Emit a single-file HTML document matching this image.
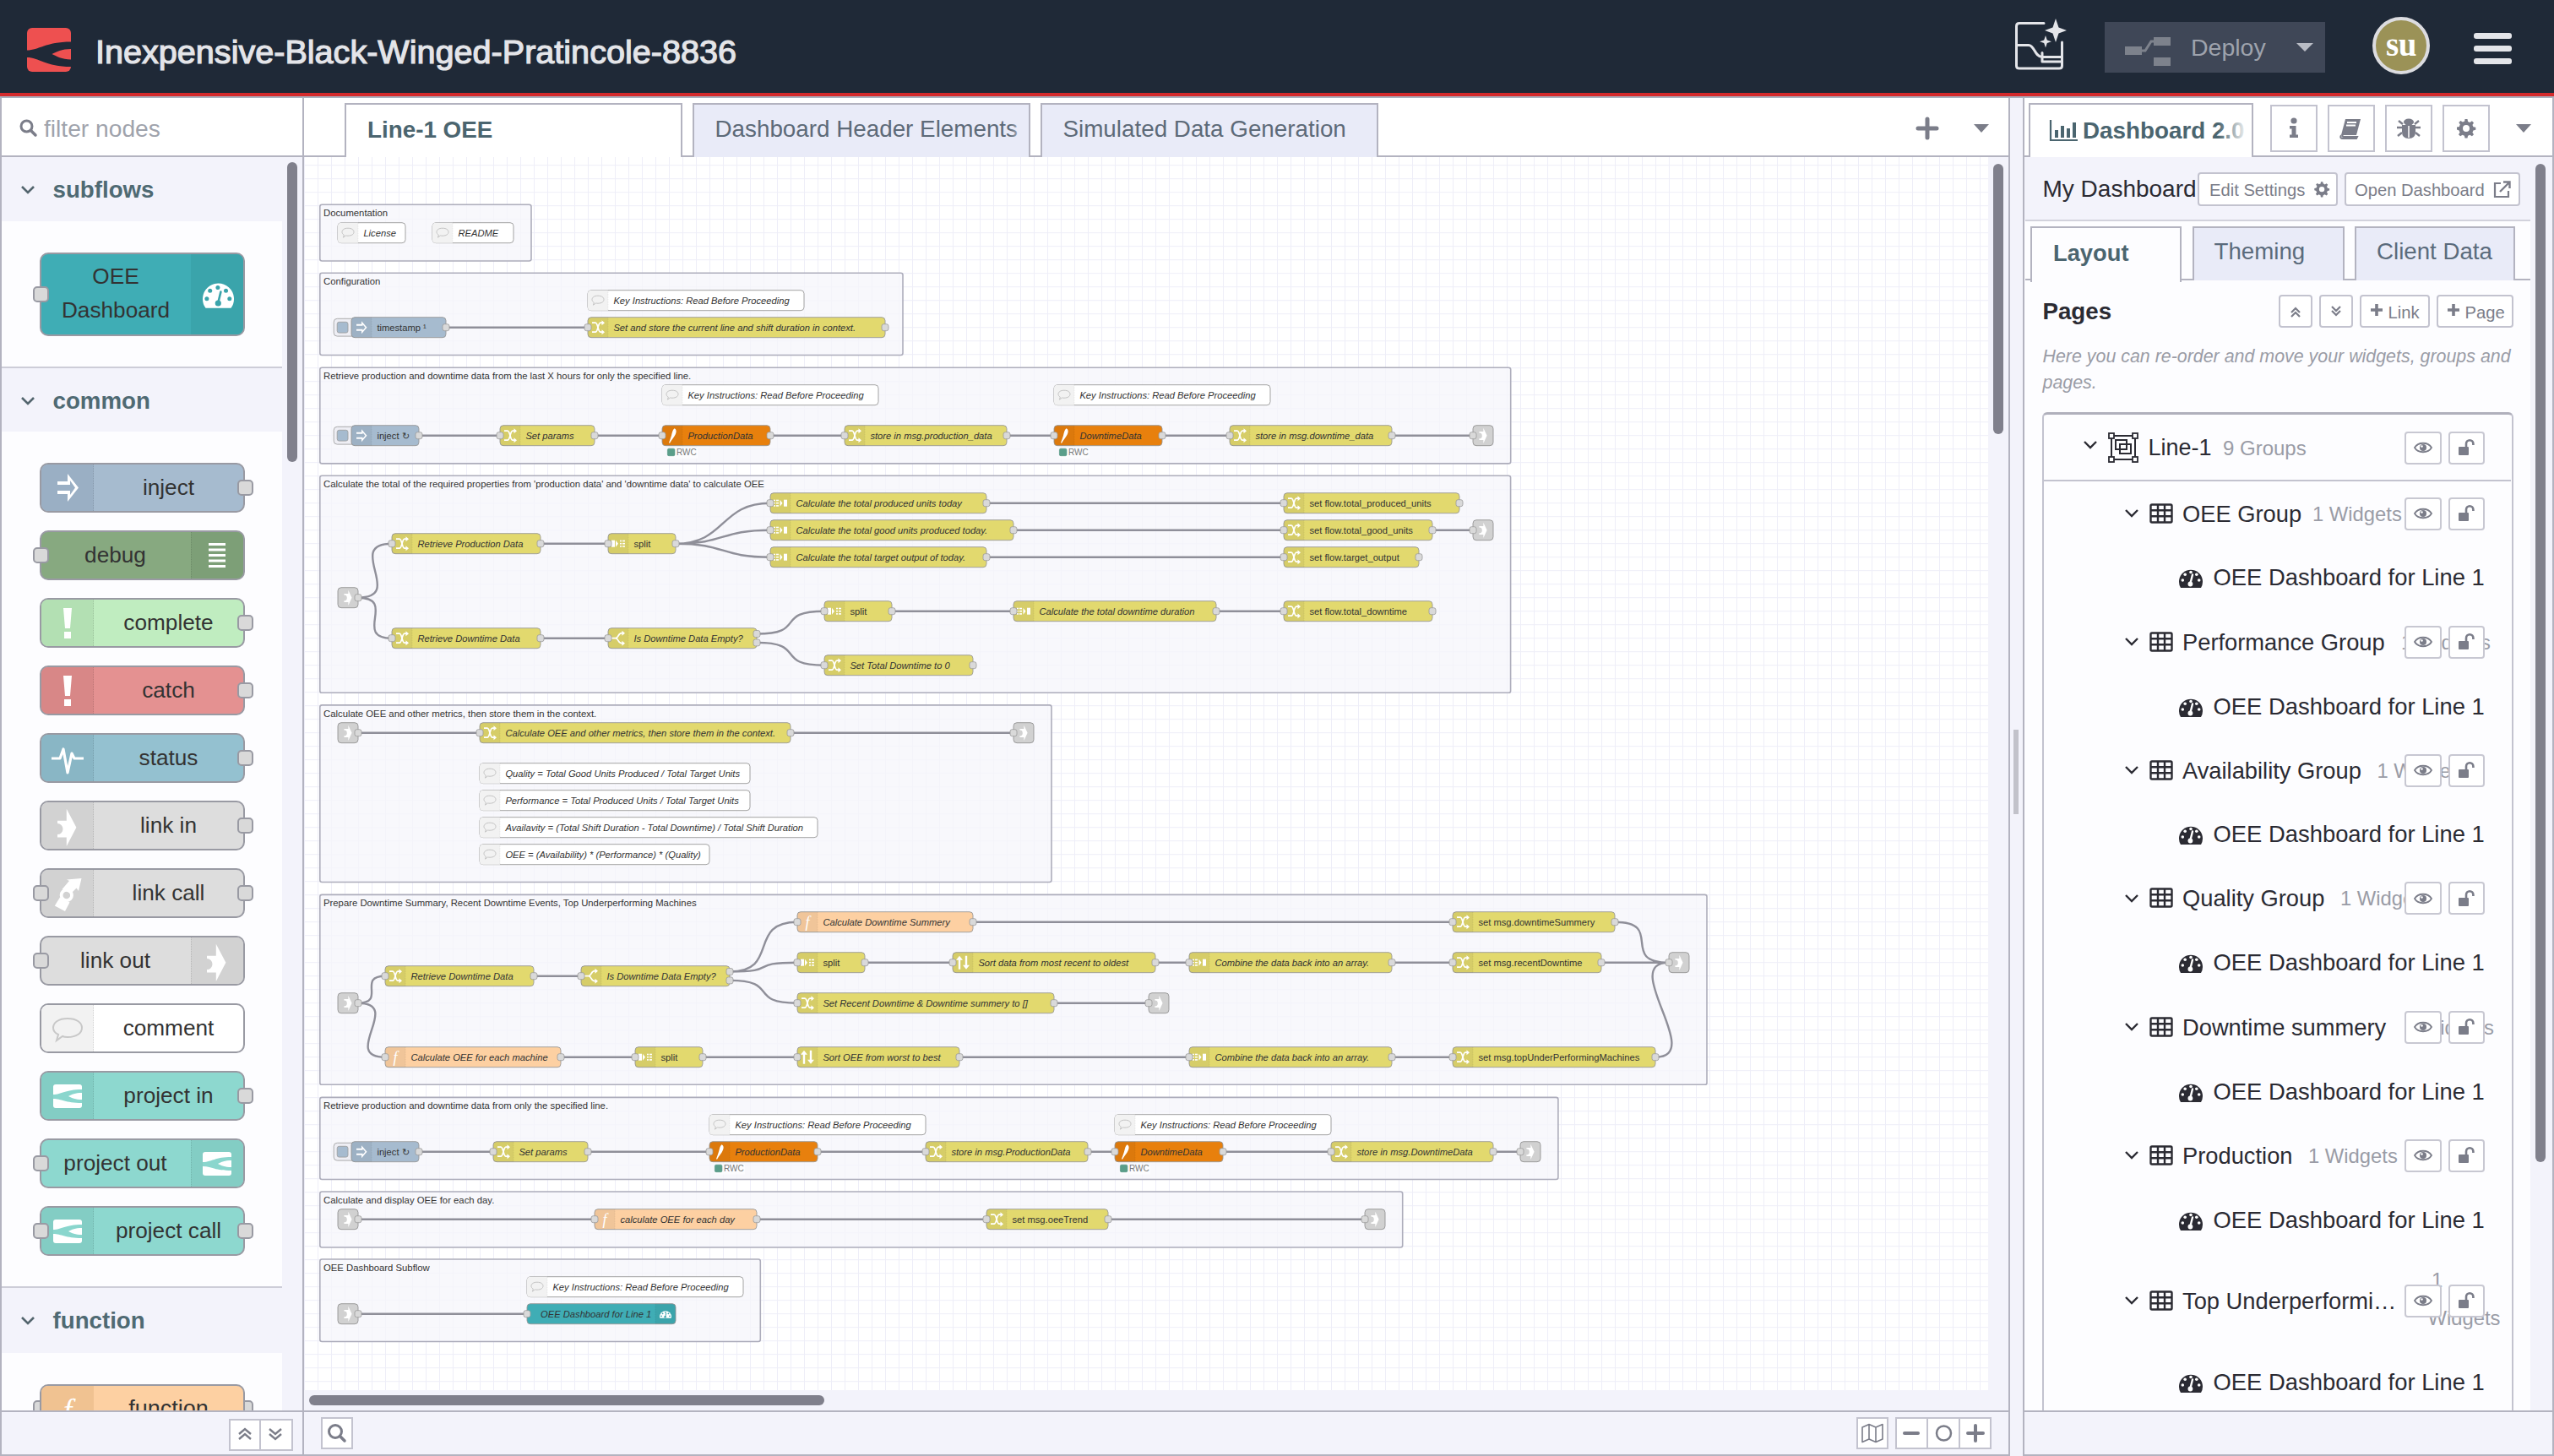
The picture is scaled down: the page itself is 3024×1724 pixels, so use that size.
<!DOCTYPE html><html><head><meta charset="utf-8"><style>html,body{margin:0;padding:0;}body{width:3024px;height:1724px;position:relative;overflow:hidden;background:#fff;font-family:"Liberation Sans", sans-serif;}svg text{font-family:"Liberation Sans", sans-serif;}</style></head><body><div style="position:absolute;left:0px;top:0px;width:3024px;height:110px;background:#1f2937;"></div><div style="position:absolute;left:0px;top:110px;width:3024px;height:4px;background:#d42a2c;"></div><div style="position:absolute;left:0px;top:114px;width:3024px;height:2px;background:#aab0bd;"></div><svg style="position:absolute;left:32px;top:33px;" width="52" height="52" viewBox="0 0 52 52"><rect x="0" y="0" width="52" height="52" rx="6" fill="#ee5050"/><path d="M0 26.5 C 14 26.5, 22 16.5, 52 16.5 L 52 25 C 41 25, 35 28.5, 29.5 31 C 35 33.5, 41 37.5, 52 37.5 L 52 46 C 22 46, 14 35, 0 35 Z" fill="#1f2937"/></svg><div style="position:absolute;left:113px;top:42.48px;font-size:39.6px;line-height:39.6px;color:#e4e5e9;font-weight:normal;font-style:normal;white-space:nowrap;-webkit-text-stroke:1.2px #e4e5e9;">Inexpensive-Black-Winged-Pratincole-8836</div><svg style="position:absolute;left:2380px;top:18px;" width="70" height="68" viewBox="0 0 70 68"><g fill="none" stroke="#e4e5e9" stroke-width="3" stroke-linecap="round" stroke-linejoin="round"><path d="M40 9.5 H 11 Q 7.5 9.5 7.5 13 V 60 Q 7.5 63 11 63 H 58 Q 61.5 63 61.5 60 V 32"/><path d="M7.5 35.5 H 22 C 29 35.5, 29 49.5, 38 49.5 H 61"/><path d="M38 44.5 V 55 H 61"/></g><path d="M54 4 L 57.5 14.5 L 67 18 L 57.5 21.5 L 54 32 L 50.5 21.5 L 41 18 L 50.5 14.5 Z" fill="#e4e5e9"/><path d="M42 24 L 43.8 29.5 L 49 31.3 L 43.8 33 L 42 38.5 L 40.2 33 L 35 31.3 L 40.2 29.5 Z" fill="#e4e5e9"/></svg><div style="position:absolute;left:2492px;top:26px;width:261px;height:60px;background:#3f4757;"></div><svg style="position:absolute;left:2514px;top:40px;" width="60" height="40" viewBox="0 0 60 40"><rect x="2" y="15" width="20" height="10" fill="#7d828c"/><path d="M22 20 L 26 20 L 33 9 L 37 9" stroke="#7d828c" stroke-width="3" fill="none"/><rect x="36" y="4" width="20" height="10" fill="#7d828c"/><rect x="36" y="28" width="20" height="10" fill="#7d828c"/></svg><div style="position:absolute;left:2594px;top:41.87px;font-size:28.5px;line-height:28.5px;color:#9ea3ad;font-weight:normal;font-style:normal;white-space:nowrap;">Deploy</div><svg style="position:absolute;left:2718px;top:50px;" width="22" height="12" viewBox="0 0 22 12"><path d="M1 1 L 21 1 L 11 11 Z" fill="#b9bcc5"/></svg><div style="position:absolute;left:2809px;top:20px;width:60px;height:60px;border-radius:50%;background:#9b9257;border:4px solid #dcdce0;"></div><div style="position:absolute;left:1843px;width:2000px;text-align:center;top:32.99px;font-size:39px;line-height:39px;color:#ffffff;font-weight:bold;font-style:normal;white-space:nowrap;font-family:'Liberation Serif',serif;letter-spacing:-0.5px;">su</div><div style="position:absolute;left:2929px;top:39.3px;width:45px;height:7.0px;background:#e4e5e9;border-radius:3px;"></div><div style="position:absolute;left:2929px;top:54.2px;width:45px;height:7.0px;background:#e4e5e9;border-radius:3px;"></div><div style="position:absolute;left:2929px;top:68.8px;width:45px;height:7.0px;background:#e4e5e9;border-radius:3px;"></div><div style="position:absolute;left:0px;top:116px;width:2px;height:1608px;background:#b3b3c0;"></div><div style="position:absolute;left:358px;top:116px;width:2px;height:1608px;background:#b3b3c0;"></div><div style="position:absolute;left:2px;top:116px;width:356px;height:68px;background:#fff;"></div><div style="position:absolute;left:2px;top:184px;width:356px;height:2px;background:#b3b3c0;"></div><svg style="position:absolute;left:22px;top:140px;" width="24" height="24" viewBox="0 0 24 24"><circle cx="9.5" cy="9.5" r="6.5" fill="none" stroke="#7b7d89" stroke-width="3"/><path d="M14.5 14.5 L 20 20" stroke="#7b7d89" stroke-width="3.5" stroke-linecap="round"/></svg><div style="position:absolute;left:52px;top:137.53px;font-size:28.2px;line-height:28.2px;color:#9fa3ac;font-weight:normal;font-style:normal;white-space:nowrap;">filter nodes</div><div style="position:absolute;left:2px;top:186px;width:356px;height:1484px;background:#f3f3fb;"></div><div style="position:absolute;left:340px;top:192px;width:12px;height:355px;background:#80808c;border-radius:6px;"></div><svg style="position:absolute;left:24px;top:219px;" width="18" height="12" viewBox="0 0 18 12"><path d="M2 2 L 9 9 L 16 2" fill="none" stroke="#53656e" stroke-width="2.6"/></svg><div style="position:absolute;left:62.5px;top:210.85px;font-size:27.7px;line-height:27.7px;color:#4f6a73;font-weight:bold;font-style:normal;white-space:nowrap;">subflows</div><div style="position:absolute;left:2px;top:262px;width:332px;height:172px;background:#fdfdff;"></div><div style="position:absolute;left:2px;top:434px;width:332px;height:2px;background:#cdcdd8;"></div><svg style="position:absolute;left:24px;top:469px;" width="18" height="12" viewBox="0 0 18 12"><path d="M2 2 L 9 9 L 16 2" fill="none" stroke="#53656e" stroke-width="2.6"/></svg><div style="position:absolute;left:62.5px;top:460.85px;font-size:27.7px;line-height:27.7px;color:#4f6a73;font-weight:bold;font-style:normal;white-space:nowrap;">common</div><div style="position:absolute;left:2px;top:511px;width:332px;height:1012px;background:#fdfdff;"></div><div style="position:absolute;left:2px;top:1523px;width:332px;height:2px;background:#cdcdd8;"></div><svg style="position:absolute;left:24px;top:1558px;" width="18" height="12" viewBox="0 0 18 12"><path d="M2 2 L 9 9 L 16 2" fill="none" stroke="#53656e" stroke-width="2.6"/></svg><div style="position:absolute;left:62.5px;top:1549.85px;font-size:27.7px;line-height:27.7px;color:#4f6a73;font-weight:bold;font-style:normal;white-space:nowrap;">function</div><div style="position:absolute;left:2px;top:1602px;width:332px;height:68px;background:#fdfdff;"></div><div style="position:absolute;left:46.5px;top:548px;width:239px;height:55px;border:2px solid #999aa3;border-radius:10px;background:#a6bbcf;overflow:hidden;"><div style="position:absolute;left:0;top:0;width:61px;height:100%;background:#9aafc4;border-right:1px dotted rgba(0,0,0,0.12);"></div><svg style="position:absolute;left:0;top:0" width="62" height="55" viewBox="0 0 62 55"><path d="M19 20 H 31 V 11 L 44 27.5 L 31 44 V 35 H 19 V 31 H 34 V 36 L 40 27.5 L 34 19 V 24 H 19 Z" fill="#fff"/></svg><div style="position:absolute;left:63px;right:0;top:0;height:100%;text-align:center;font-size:26.2px;line-height:55px;color:#333;white-space:nowrap;">inject</div></div><div style="position:absolute;left:280.5px;top:568.0px;width:15px;height:15px;border:2px solid #999aa3;border-radius:5px;background:#d9d9d9;"></div><div style="position:absolute;left:46.5px;top:628px;width:239px;height:55px;border:2px solid #999aa3;border-radius:10px;background:#87a980;overflow:hidden;"><div style="position:absolute;right:0;top:0;width:61px;height:100%;background:#7d9f77;border-left:1px dotted rgba(0,0,0,0.12);"></div><svg style="position:absolute;right:0;top:0" width="62" height="55" viewBox="0 0 62 55"><g fill="#fff"><rect x="21" y="13" width="20" height="3"/><rect x="21" y="19.5" width="20" height="3"/><rect x="21" y="26" width="20" height="3"/><rect x="21" y="32.5" width="20" height="3"/><rect x="21" y="39" width="20" height="3"/></g></svg><div style="position:absolute;left:0;right:63px;top:0;height:100%;text-align:center;font-size:26.2px;line-height:55px;color:#333;white-space:nowrap;">debug</div></div><div style="position:absolute;left:38.5px;top:648.0px;width:15px;height:15px;border:2px solid #999aa3;border-radius:5px;background:#d9d9d9;"></div><div style="position:absolute;left:46.5px;top:708px;width:239px;height:55px;border:2px solid #999aa3;border-radius:10px;background:#c0edc0;overflow:hidden;"><div style="position:absolute;left:0;top:0;width:61px;height:100%;background:#b3e0b3;border-right:1px dotted rgba(0,0,0,0.12);"></div><svg style="position:absolute;left:0;top:0" width="62" height="55" viewBox="0 0 62 55"><g fill="#fff"><path d="M26 10 H 36 L 34 34 H 28 Z"/><rect x="27" y="38" width="8" height="8"/></g></svg><div style="position:absolute;left:63px;right:0;top:0;height:100%;text-align:center;font-size:26.2px;line-height:55px;color:#333;white-space:nowrap;">complete</div></div><div style="position:absolute;left:280.5px;top:728.0px;width:15px;height:15px;border:2px solid #999aa3;border-radius:5px;background:#d9d9d9;"></div><div style="position:absolute;left:46.5px;top:788px;width:239px;height:55px;border:2px solid #999aa3;border-radius:10px;background:#e49191;overflow:hidden;"><div style="position:absolute;left:0;top:0;width:61px;height:100%;background:#d88787;border-right:1px dotted rgba(0,0,0,0.12);"></div><svg style="position:absolute;left:0;top:0" width="62" height="55" viewBox="0 0 62 55"><g fill="#fff"><path d="M26 10 H 36 L 34 34 H 28 Z"/><rect x="27" y="38" width="8" height="8"/></g></svg><div style="position:absolute;left:63px;right:0;top:0;height:100%;text-align:center;font-size:26.2px;line-height:55px;color:#333;white-space:nowrap;">catch</div></div><div style="position:absolute;left:280.5px;top:808.0px;width:15px;height:15px;border:2px solid #999aa3;border-radius:5px;background:#d9d9d9;"></div><div style="position:absolute;left:46.5px;top:868px;width:239px;height:55px;border:2px solid #999aa3;border-radius:10px;background:#94c1d0;overflow:hidden;"><div style="position:absolute;left:0;top:0;width:61px;height:100%;background:#89b6c5;border-right:1px dotted rgba(0,0,0,0.12);"></div><svg style="position:absolute;left:0;top:0" width="62" height="55" viewBox="0 0 62 55"><path d="M12 28 H 22 L 26 17 L 31 45 L 36 22 L 39 28 H 50" fill="none" stroke="#fff" stroke-width="3.2" stroke-linejoin="round"/></svg><div style="position:absolute;left:63px;right:0;top:0;height:100%;text-align:center;font-size:26.2px;line-height:55px;color:#333;white-space:nowrap;">status</div></div><div style="position:absolute;left:280.5px;top:888.0px;width:15px;height:15px;border:2px solid #999aa3;border-radius:5px;background:#d9d9d9;"></div><div style="position:absolute;left:46.5px;top:948px;width:239px;height:55px;border:2px solid #999aa3;border-radius:10px;background:#dddddd;overflow:hidden;"><div style="position:absolute;left:0;top:0;width:61px;height:100%;background:#d2d2d2;border-right:1px dotted rgba(0,0,0,0.12);"></div><svg style="position:absolute;left:0;top:0" width="62" height="55" viewBox="0 0 62 55"><path d="M19 21.7 H29.8 V7.7 L41.4 29.7 L29.8 52 V41.5 H19 V38.1 A6.5 6.5 0 0 0 19 25.1 Z" fill="#fff"/></svg><div style="position:absolute;left:63px;right:0;top:0;height:100%;text-align:center;font-size:26.2px;line-height:55px;color:#333;white-space:nowrap;">link in</div></div><div style="position:absolute;left:280.5px;top:968.0px;width:15px;height:15px;border:2px solid #999aa3;border-radius:5px;background:#d9d9d9;"></div><div style="position:absolute;left:46.5px;top:1028px;width:239px;height:55px;border:2px solid #999aa3;border-radius:10px;background:#dddddd;overflow:hidden;"><div style="position:absolute;left:0;top:0;width:61px;height:100%;background:#d2d2d2;border-right:1px dotted rgba(0,0,0,0.12);"></div><svg style="position:absolute;left:0;top:0" width="62" height="55" viewBox="0 0 62 55"><circle cx="29.8" cy="30" r="6.2" fill="none" stroke="#fff" stroke-width="3.8"/><path d="M24.5 23 L 33 13 L 30 11.5 L 47.5 10 L 44 25 L 41.5 21.5 L 35 28 Z" fill="#fff"/><path d="M15.8 42.4 L 22 32.5 L 33.5 38.5 L 28 49 Z" fill="#fff"/></svg><div style="position:absolute;left:63px;right:0;top:0;height:100%;text-align:center;font-size:26.2px;line-height:55px;color:#333;white-space:nowrap;">link call</div></div><div style="position:absolute;left:38.5px;top:1048.0px;width:15px;height:15px;border:2px solid #999aa3;border-radius:5px;background:#d9d9d9;"></div><div style="position:absolute;left:280.5px;top:1048.0px;width:15px;height:15px;border:2px solid #999aa3;border-radius:5px;background:#d9d9d9;"></div><div style="position:absolute;left:46.5px;top:1108px;width:239px;height:55px;border:2px solid #999aa3;border-radius:10px;background:#dddddd;overflow:hidden;"><div style="position:absolute;right:0;top:0;width:61px;height:100%;background:#d2d2d2;border-left:1px dotted rgba(0,0,0,0.12);"></div><svg style="position:absolute;right:0;top:0" width="62" height="55" viewBox="0 0 62 55"><path d="M19 21.7 H29.8 V7.7 L41.4 29.7 L29.8 52 V41.5 H19 V38.1 A6.5 6.5 0 0 0 19 25.1 Z" fill="#fff"/></svg><div style="position:absolute;left:0;right:63px;top:0;height:100%;text-align:center;font-size:26.2px;line-height:55px;color:#333;white-space:nowrap;">link out</div></div><div style="position:absolute;left:38.5px;top:1128.0px;width:15px;height:15px;border:2px solid #999aa3;border-radius:5px;background:#d9d9d9;"></div><div style="position:absolute;left:46.5px;top:1188px;width:239px;height:55px;border:2px solid #999aa3;border-radius:10px;background:#ffffff;overflow:hidden;"><div style="position:absolute;left:0;top:0;width:61px;height:100%;background:#f2f2f2;border-right:1px dotted rgba(0,0,0,0.12);"></div><svg style="position:absolute;left:0;top:0" width="62" height="55" viewBox="0 0 62 55"><path d="M31 16 C 42 16 48 21 48 27 C 48 33 42 38 31 38 C 29 38 27 38 25 37 L 18 42 L 20 35 C 16 33 14 30 14 27 C 14 21 20 16 31 16 Z" fill="none" stroke="#c8c8c8" stroke-width="2"/></svg><div style="position:absolute;left:63px;right:0;top:0;height:100%;text-align:center;font-size:26.2px;line-height:55px;color:#333;white-space:nowrap;">comment</div></div><div style="position:absolute;left:46.5px;top:1268px;width:239px;height:55px;border:2px solid #999aa3;border-radius:10px;background:#8dd8cf;overflow:hidden;"><div style="position:absolute;left:0;top:0;width:61px;height:100%;background:#83cdc4;border-right:1px dotted rgba(0,0,0,0.12);"></div><svg style="position:absolute;left:0;top:0" width="62" height="55" viewBox="0 0 62 55"><rect x="14" y="14" width="34" height="28" rx="3" fill="#fff"/><path d="M14 26 C 24 26, 28 20, 48 20 L 48 24 C 40 24, 36 26, 32 28 C 36 30, 40 32, 48 32 L 48 36 C 28 36, 24 31, 14 31 Z" fill="#8ad6cd"/></svg><div style="position:absolute;left:63px;right:0;top:0;height:100%;text-align:center;font-size:26.2px;line-height:55px;color:#333;white-space:nowrap;">project in</div></div><div style="position:absolute;left:280.5px;top:1288.0px;width:15px;height:15px;border:2px solid #999aa3;border-radius:5px;background:#d9d9d9;"></div><div style="position:absolute;left:46.5px;top:1348px;width:239px;height:55px;border:2px solid #999aa3;border-radius:10px;background:#8dd8cf;overflow:hidden;"><div style="position:absolute;right:0;top:0;width:61px;height:100%;background:#83cdc4;border-left:1px dotted rgba(0,0,0,0.12);"></div><svg style="position:absolute;right:0;top:0" width="62" height="55" viewBox="0 0 62 55"><rect x="14" y="14" width="34" height="28" rx="3" fill="#fff"/><path d="M14 26 C 24 26, 28 20, 48 20 L 48 24 C 40 24, 36 26, 32 28 C 36 30, 40 32, 48 32 L 48 36 C 28 36, 24 31, 14 31 Z" fill="#8ad6cd"/></svg><div style="position:absolute;left:0;right:63px;top:0;height:100%;text-align:center;font-size:26.2px;line-height:55px;color:#333;white-space:nowrap;">project out</div></div><div style="position:absolute;left:38.5px;top:1368.0px;width:15px;height:15px;border:2px solid #999aa3;border-radius:5px;background:#d9d9d9;"></div><div style="position:absolute;left:46.5px;top:1428px;width:239px;height:55px;border:2px solid #999aa3;border-radius:10px;background:#8dd8cf;overflow:hidden;"><div style="position:absolute;left:0;top:0;width:61px;height:100%;background:#83cdc4;border-right:1px dotted rgba(0,0,0,0.12);"></div><svg style="position:absolute;left:0;top:0" width="62" height="55" viewBox="0 0 62 55"><rect x="14" y="14" width="34" height="28" rx="3" fill="#fff"/><path d="M14 26 C 24 26, 28 20, 48 20 L 48 24 C 40 24, 36 26, 32 28 C 36 30, 40 32, 48 32 L 48 36 C 28 36, 24 31, 14 31 Z" fill="#8ad6cd"/></svg><div style="position:absolute;left:63px;right:0;top:0;height:100%;text-align:center;font-size:26.2px;line-height:55px;color:#333;white-space:nowrap;">project call</div></div><div style="position:absolute;left:38.5px;top:1448.0px;width:15px;height:15px;border:2px solid #999aa3;border-radius:5px;background:#d9d9d9;"></div><div style="position:absolute;left:280.5px;top:1448.0px;width:15px;height:15px;border:2px solid #999aa3;border-radius:5px;background:#d9d9d9;"></div><div style="position:absolute;left:46.5px;top:299px;width:239px;height:95px;border:2px solid #999aa3;border-radius:10px;background:#3fadb5;overflow:hidden;"><div style="position:absolute;right:0;top:0;width:62px;height:100%;background:#3aa4ab;"></div><svg style="position:absolute;right:0;top:0" width="62" height="95" viewBox="0 0 62 95"><path d="M17.5 63.8 A18.5 18.5 0 1 1 47.5 63.8 Z" fill="#fff"/><g fill="#3aa4ab"><circle cx="31.9" cy="39.5" r="2.5"/><circle cx="22.7" cy="43.2" r="2.5"/><circle cx="41.5" cy="43.2" r="2.5"/><circle cx="18.9" cy="52.7" r="2.5"/><circle cx="45.8" cy="52.7" r="2.5"/></g><path d="M35.4 44.6 L 32.4 57" stroke="#3aa4ab" stroke-width="2.6" stroke-linecap="round"/><circle cx="32.3" cy="58" r="3.6" fill="#3aa4ab"/></svg><div style="position:absolute;left:0;width:177px;top:6px;text-align:center;font-size:26.2px;line-height:40px;color:#333;">OEE<br>Dashboard</div></div><div style="position:absolute;left:38.5px;top:338.5px;width:15px;height:15px;border:2px solid #999aa3;border-radius:5px;background:#d9d9d9;"></div><div style="position:absolute;left:0;top:1602px;width:334px;height:68px;overflow:hidden;"><div style="position:absolute;left:38.5px;top:56px;width:15px;height:15px;border:2px solid #999aa3;border-radius:5px;background:#d9d9d9;"></div><div style="position:absolute;left:280.5px;top:56px;width:15px;height:15px;border:2px solid #999aa3;border-radius:5px;background:#d9d9d9;"></div><div style="position:absolute;left:46.5px;top:37px;width:239px;height:55px;border:2px solid #999aa3;border-radius:10px;background:#fdd0a2;overflow:hidden;"><div style="position:absolute;left:0;top:0;width:62px;height:100%;background:#f0c291;"></div><svg style="position:absolute;left:0;top:0" width="62" height="55"><text x="31" y="42" text-anchor="middle" font-size="38" font-style="italic" fill="#fff" style="font-family:'Liberation Serif',serif">f</text></svg><div style="position:absolute;left:63px;right:0;top:0;text-align:center;font-size:27px;line-height:55px;color:#333;">function</div></div></div><div style="position:absolute;left:2px;top:1670px;width:356px;height:2px;background:#b3b3c0;"></div><div style="position:absolute;left:2px;top:1672px;width:356px;height:50px;background:#f3f3fb;"></div><div style="position:absolute;left:0px;top:1722px;width:360px;height:2px;background:#b3b3c0;"></div><div style="position:absolute;left:271px;top:1680px;width:72px;height:34px;border:2px solid #c3c3cf;background:#fff;"></div><div style="position:absolute;left:307px;top:1680px;width:2px;height:36px;background:#c3c3cf;"></div><svg style="position:absolute;left:275px;top:1686px;" width="30" height="24" viewBox="0 0 30 24"><path d="M8 12 L 15 6 L 22 12 M8 18 L 15 12 L 22 18" fill="none" stroke="#7b7d89" stroke-width="2.4"/></svg><svg style="position:absolute;left:311px;top:1686px;" width="30" height="24" viewBox="0 0 30 24"><path d="M8 6 L 15 12 L 22 6 M8 12 L 15 18 L 22 12" fill="none" stroke="#7b7d89" stroke-width="2.4"/></svg><div style="position:absolute;left:360px;top:116px;width:2018px;height:68px;background:#fff;"></div><div style="position:absolute;left:360px;top:184px;width:2018px;height:2px;background:#b3b3c0;"></div><div style="position:absolute;left:2378px;top:116px;width:2px;height:1608px;background:#b3b3c0;"></div><div style="position:absolute;left:408px;top:122px;width:396px;height:64px;border:2px solid #b3b3c0;border-bottom:none;background:#fff;"></div><div style="position:absolute;left:435px;top:139.77px;font-size:27.8px;line-height:27.8px;color:#4b656f;font-weight:bold;font-style:normal;white-space:nowrap;">Line-1 OEE</div><div style="position:absolute;left:820px;top:122px;width:396px;height:62px;border:2px solid #b3b3c0;border-bottom:none;background:#e9ebf8;overflow:hidden;"><div style="position:absolute;left:24.5px;top:14.97px;font-size:27.8px;line-height:27.8px;color:#5d6a78;white-space:nowrap;">Dashboard Header Elements</div><div style="position:absolute;right:0;top:0;width:22px;height:100%;background:linear-gradient(to right,rgba(233,235,248,0),#e9ebf8 90%);"></div></div><div style="position:absolute;left:1232px;top:122px;width:396px;height:62px;border:2px solid #b3b3c0;border-bottom:none;background:#e9ebf8;overflow:hidden;"><div style="position:absolute;left:24.5px;top:14.97px;font-size:27.8px;line-height:27.8px;color:#5d6a78;white-space:nowrap;">Simulated Data Generation</div><div style="position:absolute;right:0;top:0;width:22px;height:100%;background:linear-gradient(to right,rgba(233,235,248,0),#e9ebf8 90%);"></div></div><svg style="position:absolute;left:2268px;top:138px;" width="28" height="28" viewBox="0 0 28 28"><path d="M14 3 V 25 M3 14 H 25" stroke="#7b7d89" stroke-width="5" stroke-linecap="round"/></svg><svg style="position:absolute;left:2336px;top:146px;" width="20" height="12" viewBox="0 0 20 12"><path d="M1 1 H 19 L 10 11 Z" fill="#7b7d89"/></svg><svg style="position:absolute;left:360px;top:186px" width="1994" height="1460" viewBox="360 186 1994 1460"><rect x="360" y="186" width="1994" height="1460" fill="#ffffff"/><path d="M360.5 186V1646M376.5 186V1646M392.5 186V1646M408.5 186V1646M424.5 186V1646M440.5 186V1646M456.5 186V1646M472.5 186V1646M488.5 186V1646M504.5 186V1646M520.5 186V1646M536.5 186V1646M552.5 186V1646M568.5 186V1646M584.5 186V1646M600.5 186V1646M616.5 186V1646M632.5 186V1646M648.5 186V1646M664.5 186V1646M680.5 186V1646M696.5 186V1646M712.5 186V1646M728.5 186V1646M744.5 186V1646M760.5 186V1646M776.5 186V1646M792.5 186V1646M808.5 186V1646M824.5 186V1646M840.5 186V1646M856.5 186V1646M872.5 186V1646M888.5 186V1646M904.5 186V1646M920.5 186V1646M936.5 186V1646M952.5 186V1646M968.5 186V1646M984.5 186V1646M1000.5 186V1646M1016.5 186V1646M1032.5 186V1646M1048.5 186V1646M1064.5 186V1646M1080.5 186V1646M1096.5 186V1646M1112.5 186V1646M1128.5 186V1646M1144.5 186V1646M1160.5 186V1646M1176.5 186V1646M1192.5 186V1646M1208.5 186V1646M1224.5 186V1646M1240.5 186V1646M1256.5 186V1646M1272.5 186V1646M1288.5 186V1646M1304.5 186V1646M1320.5 186V1646M1336.5 186V1646M1352.5 186V1646M1368.5 186V1646M1384.5 186V1646M1400.5 186V1646M1416.5 186V1646M1432.5 186V1646M1448.5 186V1646M1464.5 186V1646M1480.5 186V1646M1496.5 186V1646M1512.5 186V1646M1528.5 186V1646M1544.5 186V1646M1560.5 186V1646M1576.5 186V1646M1592.5 186V1646M1608.5 186V1646M1624.5 186V1646M1640.5 186V1646M1656.5 186V1646M1672.5 186V1646M1688.5 186V1646M1704.5 186V1646M1720.5 186V1646M1736.5 186V1646M1752.5 186V1646M1768.5 186V1646M1784.5 186V1646M1800.5 186V1646M1816.5 186V1646M1832.5 186V1646M1848.5 186V1646M1864.5 186V1646M1880.5 186V1646M1896.5 186V1646M1912.5 186V1646M1928.5 186V1646M1944.5 186V1646M1960.5 186V1646M1976.5 186V1646M1992.5 186V1646M2008.5 186V1646M2024.5 186V1646M2040.5 186V1646M2056.5 186V1646M2072.5 186V1646M2088.5 186V1646M2104.5 186V1646M2120.5 186V1646M2136.5 186V1646M2152.5 186V1646M2168.5 186V1646M2184.5 186V1646M2200.5 186V1646M2216.5 186V1646M2232.5 186V1646M2248.5 186V1646M2264.5 186V1646M2280.5 186V1646M2296.5 186V1646M2312.5 186V1646M2328.5 186V1646M2344.5 186V1646M360 195.7H2354M360 211.7H2354M360 227.7H2354M360 243.7H2354M360 259.7H2354M360 275.7H2354M360 291.7H2354M360 307.7H2354M360 323.7H2354M360 339.7H2354M360 355.7H2354M360 371.7H2354M360 387.7H2354M360 403.7H2354M360 419.7H2354M360 435.7H2354M360 451.7H2354M360 467.7H2354M360 483.7H2354M360 499.7H2354M360 515.7H2354M360 531.7H2354M360 547.7H2354M360 563.7H2354M360 579.7H2354M360 595.7H2354M360 611.7H2354M360 627.7H2354M360 643.7H2354M360 659.7H2354M360 675.7H2354M360 691.7H2354M360 707.7H2354M360 723.7H2354M360 739.7H2354M360 755.7H2354M360 771.7H2354M360 787.7H2354M360 803.7H2354M360 819.7H2354M360 835.7H2354M360 851.7H2354M360 867.7H2354M360 883.7H2354M360 899.7H2354M360 915.7H2354M360 931.7H2354M360 947.7H2354M360 963.7H2354M360 979.7H2354M360 995.7H2354M360 1011.7H2354M360 1027.7H2354M360 1043.7H2354M360 1059.7H2354M360 1075.7H2354M360 1091.7H2354M360 1107.7H2354M360 1123.7H2354M360 1139.7H2354M360 1155.7H2354M360 1171.7H2354M360 1187.7H2354M360 1203.7H2354M360 1219.7H2354M360 1235.7H2354M360 1251.7H2354M360 1267.7H2354M360 1283.7H2354M360 1299.7H2354M360 1315.7H2354M360 1331.7H2354M360 1347.7H2354M360 1363.7H2354M360 1379.7H2354M360 1395.7H2354M360 1411.7H2354M360 1427.7H2354M360 1443.7H2354M360 1459.7H2354M360 1475.7H2354M360 1491.7H2354M360 1507.7H2354M360 1523.7H2354M360 1539.7H2354M360 1555.7H2354M360 1571.7H2354M360 1587.7H2354M360 1603.7H2354M360 1619.7H2354M360 1635.7H2354" stroke="#eeeef8" stroke-width="1" fill="none"/><rect x="378.8" y="242.3" width="250.2" height="66.7" rx="2.4" fill="#f5f5fb" fill-opacity="0.75" stroke="#adadbb" stroke-width="1.6"/><text x="383.0" y="256.1" font-size="11.32" fill="#333">Documentation</text><rect x="378.8" y="323.2" width="690.2" height="97.3" rx="2.4" fill="#f5f5fb" fill-opacity="0.75" stroke="#adadbb" stroke-width="1.6"/><text x="383.0" y="337.0" font-size="11.32" fill="#333">Configuration</text><rect x="378.8" y="435.2" width="1409.9" height="113.7" rx="2.4" fill="#f5f5fb" fill-opacity="0.75" stroke="#adadbb" stroke-width="1.6"/><text x="383.0" y="449.0" font-size="11.32" fill="#333">Retrieve production and downtime data from the last X hours for only the specified line.</text><rect x="378.8" y="563.2" width="1409.8" height="257.1" rx="2.4" fill="#f5f5fb" fill-opacity="0.75" stroke="#adadbb" stroke-width="1.6"/><text x="383.0" y="577.0" font-size="11.32" fill="#333">Calculate the total of the required properties from 'production data' and 'downtime data' to calculate OEE</text><rect x="378.8" y="834.9" width="866.2" height="209.6" rx="2.4" fill="#f5f5fb" fill-opacity="0.75" stroke="#adadbb" stroke-width="1.6"/><text x="383.0" y="848.6999999999999" font-size="11.32" fill="#333">Calculate OEE and other metrics, then store them in the context.</text><rect x="378.8" y="1059.4" width="1642.2" height="224.9" rx="2.4" fill="#f5f5fb" fill-opacity="0.75" stroke="#adadbb" stroke-width="1.6"/><text x="383.0" y="1073.2" font-size="11.32" fill="#333">Prepare Downtime Summary, Recent Downtime Events, Top Underperforming Machines</text><rect x="378.8" y="1299.4" width="1466.1" height="97.1" rx="2.4" fill="#f5f5fb" fill-opacity="0.75" stroke="#adadbb" stroke-width="1.6"/><text x="383.0" y="1313.2" font-size="11.32" fill="#333">Retrieve production and downtime data from only the specified line.</text><rect x="378.8" y="1411" width="1281.9" height="66.0" rx="2.4" fill="#f5f5fb" fill-opacity="0.75" stroke="#adadbb" stroke-width="1.6"/><text x="383.0" y="1424.8" font-size="11.32" fill="#333">Calculate and display OEE for each day.</text><rect x="378.8" y="1491" width="521.5" height="97.5" rx="2.4" fill="#f5f5fb" fill-opacity="0.75" stroke="#adadbb" stroke-width="1.6"/><text x="383.0" y="1504.8" font-size="11.32" fill="#333">OEE Dashboard Subflow</text><path d="M528.0 387.7 C588.0 387.7 636.0 387.7 696.0 387.7 M496.0 515.7 C556.0 515.7 532.0 515.7 592.0 515.7 M704.0 515.7 C764.0 515.7 724.0 515.7 784.0 515.7 M912.0 515.7 C972.0 515.7 940.0 515.7 1000.0 515.7 M1192.0 515.7 C1234.0 515.7 1206.0 515.7 1248.0 515.7 M1376.0 515.7 C1436.0 515.7 1396.0 515.7 1456.0 515.7 M1648.0 515.7 C1708.0 515.7 1684.0 515.7 1744.0 515.7 M424.0 707.7 C480.6 707.7 407.4 643.7 464.0 643.7 M424.0 707.7 C470.9 707.7 417.1 755.7 464.0 755.7 M640.0 643.7 C700.0 643.7 660.0 643.7 720.0 643.7 M800.0 643.7 C860.0 643.7 852.0 595.7 912.0 595.7 M800.0 643.7 C860.0 643.7 852.0 627.7 912.0 627.7 M800.0 643.7 C860.0 643.7 852.0 659.7 912.0 659.7 M1168.0 595.7 C1228.0 595.7 1460.0 595.7 1520.0 595.7 M1200.0 627.7 C1260.0 627.7 1460.0 627.7 1520.0 627.7 M1168.0 659.7 C1228.0 659.7 1460.0 659.7 1520.0 659.7 M1696.0 627.7 C1732.0 627.7 1708.0 627.7 1744.0 627.7 M640.0 755.7 C700.0 755.7 660.0 755.7 720.0 755.7 M896.0 750.5 C956.0 750.5 916.0 723.7 976.0 723.7 M896.0 760.9 C956.0 760.9 916.0 787.7 976.0 787.7 M1056.0 723.7 C1116.0 723.7 1140.0 723.7 1200.0 723.7 M1440.0 723.7 C1500.0 723.7 1460.0 723.7 1520.0 723.7 M424.0 867.7 C484.0 867.7 508.0 867.7 568.0 867.7 M936.0 867.7 C996.0 867.7 1140.0 867.7 1200.0 867.7 M424.0 1187.7 C457.9 1187.7 422.1 1155.7 456.0 1155.7 M424.0 1187.7 C477.7 1187.7 402.3 1251.7 456.0 1251.7 M632.0 1155.7 C674.0 1155.7 646.0 1155.7 688.0 1155.7 M864.0 1150.5 C924.0 1150.5 884.0 1091.7 944.0 1091.7 M864.0 1150.5 C924.0 1150.5 884.0 1139.7 944.0 1139.7 M864.0 1160.9 C924.0 1160.9 884.0 1187.7 944.0 1187.7 M1152.0 1091.7 C1212.0 1091.7 1660.0 1091.7 1720.0 1091.7 M1024.0 1139.7 C1084.0 1139.7 1068.0 1139.7 1128.0 1139.7 M1368.0 1139.7 C1398.0 1139.7 1378.0 1139.7 1408.0 1139.7 M1648.0 1139.7 C1702.0 1139.7 1666.0 1139.7 1720.0 1139.7 M1248.0 1187.7 C1308.0 1187.7 1300.0 1187.7 1360.0 1187.7 M664.0 1251.7 C724.0 1251.7 692.0 1251.7 752.0 1251.7 M832.0 1251.7 C892.0 1251.7 884.0 1251.7 944.0 1251.7 M1136.0 1251.7 C1196.0 1251.7 1348.0 1251.7 1408.0 1251.7 M1648.0 1251.7 C1702.0 1251.7 1666.0 1251.7 1720.0 1251.7 M1912.0 1091.7 C1972.0 1091.7 1916.0 1139.7 1976.0 1139.7 M1896.0 1139.7 C1956.0 1139.7 1916.0 1139.7 1976.0 1139.7 M1960.0 1251.7 C2020.0 1251.7 1916.0 1139.7 1976.0 1139.7 M496.0 1363.7 C556.0 1363.7 524.0 1363.7 584.0 1363.7 M696.0 1363.7 C756.0 1363.7 780.0 1363.7 840.0 1363.7 M968.0 1363.7 C1028.0 1363.7 1036.0 1363.7 1096.0 1363.7 M1288.0 1363.7 C1312.0 1363.7 1296.0 1363.7 1320.0 1363.7 M1448.0 1363.7 C1508.0 1363.7 1516.0 1363.7 1576.0 1363.7 M1768.0 1363.7 C1792.0 1363.7 1776.0 1363.7 1800.0 1363.7 M424.0 1443.7 C484.0 1443.7 644.0 1443.7 704.0 1443.7 M896.0 1443.7 C956.0 1443.7 1108.0 1443.7 1168.0 1443.7 M1312.0 1443.7 C1372.0 1443.7 1556.0 1443.7 1616.0 1443.7 M424.0 1555.7 C484.0 1555.7 564.0 1555.7 624.0 1555.7" stroke="#8f8f99" stroke-width="2.4" fill="none"/><rect x="400" y="263.7" width="80" height="24" rx="4" fill="#ffffff" stroke="#999" stroke-width="0.9"/><path d="M424 263.7 H404 Q400 263.7 400 267.7 V283.7 Q400 287.7 404 287.7 H424 Z" fill="#f2f2f2" fill-opacity="1"/><line x1="424" y1="264.2" x2="424" y2="287.2" stroke="#000" stroke-opacity="0.1" stroke-dasharray="1 1" stroke-width="0.8"/><g transform="translate(400 263.7)"><path d="M12 6.5 C 16.5 6.5 19 8.5 19 11 C 19 13.5 16.5 15.5 12 15.5 C 11 15.5 10.5 15.5 9.5 15.2 L 6.5 17.5 L 7.3 14.4 C 5.8 13.6 5 12.4 5 11 C 5 8.5 7.5 6.5 12 6.5 Z" fill="none" stroke="#c4c4c4" stroke-width="1"/></g><text x="430.4" y="279.59999999999997" font-size="11.2" font-style="italic" fill="#333">License</text><rect x="512" y="263.7" width="96" height="24" rx="4" fill="#ffffff" stroke="#999" stroke-width="0.9"/><path d="M536 263.7 H516 Q512 263.7 512 267.7 V283.7 Q512 287.7 516 287.7 H536 Z" fill="#f2f2f2" fill-opacity="1"/><line x1="536" y1="264.2" x2="536" y2="287.2" stroke="#000" stroke-opacity="0.1" stroke-dasharray="1 1" stroke-width="0.8"/><g transform="translate(512 263.7)"><path d="M12 6.5 C 16.5 6.5 19 8.5 19 11 C 19 13.5 16.5 15.5 12 15.5 C 11 15.5 10.5 15.5 9.5 15.2 L 6.5 17.5 L 7.3 14.4 C 5.8 13.6 5 12.4 5 11 C 5 8.5 7.5 6.5 12 6.5 Z" fill="none" stroke="#c4c4c4" stroke-width="1"/></g><text x="542.4" y="279.59999999999997" font-size="11.2" font-style="italic" fill="#333">README</text><rect x="696" y="343.7" width="256" height="24" rx="4" fill="#ffffff" stroke="#999" stroke-width="0.9"/><path d="M720 343.7 H700 Q696 343.7 696 347.7 V363.7 Q696 367.7 700 367.7 H720 Z" fill="#f2f2f2" fill-opacity="1"/><line x1="720" y1="344.2" x2="720" y2="367.2" stroke="#000" stroke-opacity="0.1" stroke-dasharray="1 1" stroke-width="0.8"/><g transform="translate(696 343.7)"><path d="M12 6.5 C 16.5 6.5 19 8.5 19 11 C 19 13.5 16.5 15.5 12 15.5 C 11 15.5 10.5 15.5 9.5 15.2 L 6.5 17.5 L 7.3 14.4 C 5.8 13.6 5 12.4 5 11 C 5 8.5 7.5 6.5 12 6.5 Z" fill="none" stroke="#c4c4c4" stroke-width="1"/></g><text x="726.4" y="359.59999999999997" font-size="11.2" font-style="italic" fill="#333">Key Instructions: Read Before Proceeding</text><rect x="395.2" y="377.3" width="25" height="20.8" rx="4" fill="#eeeef4" stroke="#999" stroke-width="0.8"/><rect x="399.2" y="381.3" width="12.8" height="12.8" rx="2.4" fill="#a6bbcf" stroke="#999" stroke-width="0.8"/><rect x="416" y="375.7" width="112" height="24" rx="4" fill="#a6bbcf" stroke="#999" stroke-width="0.9"/><path d="M440 375.7 H420 Q416 375.7 416 379.7 V395.7 Q416 399.7 420 399.7 H440 Z" fill="#000" fill-opacity="0.05"/><line x1="440" y1="376.2" x2="440" y2="399.2" stroke="#000" stroke-opacity="0.1" stroke-dasharray="1 1" stroke-width="0.8"/><g transform="translate(416 375.7)"><path d="M6 8 H 12 V 4.5 L 18.5 12 L 12 19.5 V 16 H 6 V 14 H 13.5 V 15.5 L 16.5 12 L 13.5 8.5 V 10 H 6 Z" fill="#fff"/></g><text x="446.4" y="391.59999999999997" font-size="11.2" font-style="normal" fill="#333">timestamp ¹</text><rect x="524" y="383.7" width="8" height="8" rx="2.4" fill="#d9d9d9" stroke="#999" stroke-width="0.8"/><rect x="696" y="375.7" width="352" height="24" rx="4" fill="#e2d96e" stroke="#999" stroke-width="0.9"/><path d="M720 375.7 H700 Q696 375.7 696 379.7 V395.7 Q696 399.7 700 399.7 H720 Z" fill="#000" fill-opacity="0.05"/><line x1="720" y1="376.2" x2="720" y2="399.2" stroke="#000" stroke-opacity="0.1" stroke-dasharray="1 1" stroke-width="0.8"/><g transform="translate(696 375.7)"><g fill="none" stroke="#fff" stroke-width="1.7"><path d="M5 6.5 H 9 C 12 6.5, 12 17.5, 15 17.5 H 17"/><path d="M5 17.5 H 9 C 12 17.5, 12 6.5, 15 6.5 H 17"/></g><path d="M16.5 3.5 L 20 6.5 L 16.5 9.5 Z M16.5 14.5 L 20 17.5 L 16.5 20.5 Z" fill="#fff"/></g><text x="726.4" y="391.59999999999997" font-size="11.2" font-style="italic" fill="#333">Set and store the current line and shift duration in context.</text><rect x="692" y="383.7" width="8" height="8" rx="2.4" fill="#d9d9d9" stroke="#999" stroke-width="0.8"/><rect x="1044" y="383.7" width="8" height="8" rx="2.4" fill="#d9d9d9" stroke="#999" stroke-width="0.8"/><rect x="784" y="455.7" width="256" height="24" rx="4" fill="#ffffff" stroke="#999" stroke-width="0.9"/><path d="M808 455.7 H788 Q784 455.7 784 459.7 V475.7 Q784 479.7 788 479.7 H808 Z" fill="#f2f2f2" fill-opacity="1"/><line x1="808" y1="456.2" x2="808" y2="479.2" stroke="#000" stroke-opacity="0.1" stroke-dasharray="1 1" stroke-width="0.8"/><g transform="translate(784 455.7)"><path d="M12 6.5 C 16.5 6.5 19 8.5 19 11 C 19 13.5 16.5 15.5 12 15.5 C 11 15.5 10.5 15.5 9.5 15.2 L 6.5 17.5 L 7.3 14.4 C 5.8 13.6 5 12.4 5 11 C 5 8.5 7.5 6.5 12 6.5 Z" fill="none" stroke="#c4c4c4" stroke-width="1"/></g><text x="814.4" y="471.59999999999997" font-size="11.2" font-style="italic" fill="#333">Key Instructions: Read Before Proceeding</text><rect x="1248" y="455.7" width="256" height="24" rx="4" fill="#ffffff" stroke="#999" stroke-width="0.9"/><path d="M1272 455.7 H1252 Q1248 455.7 1248 459.7 V475.7 Q1248 479.7 1252 479.7 H1272 Z" fill="#f2f2f2" fill-opacity="1"/><line x1="1272" y1="456.2" x2="1272" y2="479.2" stroke="#000" stroke-opacity="0.1" stroke-dasharray="1 1" stroke-width="0.8"/><g transform="translate(1248 455.7)"><path d="M12 6.5 C 16.5 6.5 19 8.5 19 11 C 19 13.5 16.5 15.5 12 15.5 C 11 15.5 10.5 15.5 9.5 15.2 L 6.5 17.5 L 7.3 14.4 C 5.8 13.6 5 12.4 5 11 C 5 8.5 7.5 6.5 12 6.5 Z" fill="none" stroke="#c4c4c4" stroke-width="1"/></g><text x="1278.4" y="471.59999999999997" font-size="11.2" font-style="italic" fill="#333">Key Instructions: Read Before Proceeding</text><rect x="395.2" y="505.3" width="25" height="20.8" rx="4" fill="#eeeef4" stroke="#999" stroke-width="0.8"/><rect x="399.2" y="509.3" width="12.8" height="12.8" rx="2.4" fill="#a6bbcf" stroke="#999" stroke-width="0.8"/><rect x="416" y="503.7" width="80" height="24" rx="4" fill="#a6bbcf" stroke="#999" stroke-width="0.9"/><path d="M440 503.7 H420 Q416 503.7 416 507.7 V523.7 Q416 527.7 420 527.7 H440 Z" fill="#000" fill-opacity="0.05"/><line x1="440" y1="504.2" x2="440" y2="527.2" stroke="#000" stroke-opacity="0.1" stroke-dasharray="1 1" stroke-width="0.8"/><g transform="translate(416 503.7)"><path d="M6 8 H 12 V 4.5 L 18.5 12 L 12 19.5 V 16 H 6 V 14 H 13.5 V 15.5 L 16.5 12 L 13.5 8.5 V 10 H 6 Z" fill="#fff"/></g><text x="446.4" y="519.6" font-size="11.2" font-style="normal" fill="#333">inject ↻</text><rect x="492" y="511.70000000000005" width="8" height="8" rx="2.4" fill="#d9d9d9" stroke="#999" stroke-width="0.8"/><rect x="592" y="503.7" width="112" height="24" rx="4" fill="#e2d96e" stroke="#999" stroke-width="0.9"/><path d="M616 503.7 H596 Q592 503.7 592 507.7 V523.7 Q592 527.7 596 527.7 H616 Z" fill="#000" fill-opacity="0.05"/><line x1="616" y1="504.2" x2="616" y2="527.2" stroke="#000" stroke-opacity="0.1" stroke-dasharray="1 1" stroke-width="0.8"/><g transform="translate(592 503.7)"><g fill="none" stroke="#fff" stroke-width="1.7"><path d="M5 6.5 H 9 C 12 6.5, 12 17.5, 15 17.5 H 17"/><path d="M5 17.5 H 9 C 12 17.5, 12 6.5, 15 6.5 H 17"/></g><path d="M16.5 3.5 L 20 6.5 L 16.5 9.5 Z M16.5 14.5 L 20 17.5 L 16.5 20.5 Z" fill="#fff"/></g><text x="622.4" y="519.6" font-size="11.2" font-style="italic" fill="#333">Set params</text><rect x="588" y="511.7" width="8" height="8" rx="2.4" fill="#d9d9d9" stroke="#999" stroke-width="0.8"/><rect x="700" y="511.70000000000005" width="8" height="8" rx="2.4" fill="#d9d9d9" stroke="#999" stroke-width="0.8"/><rect x="784" y="503.7" width="128" height="24" rx="4" fill="#e8800d" stroke="#999" stroke-width="0.9"/><path d="M808 503.7 H788 Q784 503.7 784 507.7 V523.7 Q784 527.7 788 527.7 H808 Z" fill="#000" fill-opacity="0.05"/><line x1="808" y1="504.2" x2="808" y2="527.2" stroke="#000" stroke-opacity="0.1" stroke-dasharray="1 1" stroke-width="0.8"/><g transform="translate(784 503.7)"><path d="M14.5 3.5 C 18 5, 17 10, 13 15 C 11.5 17, 10 19, 9 21 L 8 20.5 C 9 18, 10 15, 11 12 C 12 8, 12.5 5, 14.5 3.5 Z" fill="#fff"/></g><text x="814.4" y="519.6" font-size="11.2" font-style="italic" fill="#333">ProductionData</text><rect x="780" y="511.7" width="8" height="8" rx="2.4" fill="#d9d9d9" stroke="#999" stroke-width="0.8"/><rect x="908" y="511.70000000000005" width="8" height="8" rx="2.4" fill="#d9d9d9" stroke="#999" stroke-width="0.8"/><rect x="790" y="530.7" width="36" height="12" fill="#fff" fill-opacity="0.6"/><rect x="790.4" y="531.2" width="8.5" height="8.5" rx="1.5" fill="#5a9e8a" stroke="#4a8e7a" stroke-width="0.6"/><text x="801" y="539.2" font-size="10" fill="#777">RWC</text><rect x="1000" y="503.7" width="192" height="24" rx="4" fill="#e2d96e" stroke="#999" stroke-width="0.9"/><path d="M1024 503.7 H1004 Q1000 503.7 1000 507.7 V523.7 Q1000 527.7 1004 527.7 H1024 Z" fill="#000" fill-opacity="0.05"/><line x1="1024" y1="504.2" x2="1024" y2="527.2" stroke="#000" stroke-opacity="0.1" stroke-dasharray="1 1" stroke-width="0.8"/><g transform="translate(1000 503.7)"><g fill="none" stroke="#fff" stroke-width="1.7"><path d="M5 6.5 H 9 C 12 6.5, 12 17.5, 15 17.5 H 17"/><path d="M5 17.5 H 9 C 12 17.5, 12 6.5, 15 6.5 H 17"/></g><path d="M16.5 3.5 L 20 6.5 L 16.5 9.5 Z M16.5 14.5 L 20 17.5 L 16.5 20.5 Z" fill="#fff"/></g><text x="1030.4" y="519.6" font-size="11.2" font-style="italic" fill="#333">store in msg.production_data</text><rect x="996" y="511.7" width="8" height="8" rx="2.4" fill="#d9d9d9" stroke="#999" stroke-width="0.8"/><rect x="1188" y="511.70000000000005" width="8" height="8" rx="2.4" fill="#d9d9d9" stroke="#999" stroke-width="0.8"/><rect x="1248" y="503.7" width="128" height="24" rx="4" fill="#e8800d" stroke="#999" stroke-width="0.9"/><path d="M1272 503.7 H1252 Q1248 503.7 1248 507.7 V523.7 Q1248 527.7 1252 527.7 H1272 Z" fill="#000" fill-opacity="0.05"/><line x1="1272" y1="504.2" x2="1272" y2="527.2" stroke="#000" stroke-opacity="0.1" stroke-dasharray="1 1" stroke-width="0.8"/><g transform="translate(1248 503.7)"><path d="M14.5 3.5 C 18 5, 17 10, 13 15 C 11.5 17, 10 19, 9 21 L 8 20.5 C 9 18, 10 15, 11 12 C 12 8, 12.5 5, 14.5 3.5 Z" fill="#fff"/></g><text x="1278.4" y="519.6" font-size="11.2" font-style="italic" fill="#333">DowntimeData</text><rect x="1244" y="511.7" width="8" height="8" rx="2.4" fill="#d9d9d9" stroke="#999" stroke-width="0.8"/><rect x="1372" y="511.70000000000005" width="8" height="8" rx="2.4" fill="#d9d9d9" stroke="#999" stroke-width="0.8"/><rect x="1254" y="530.7" width="36" height="12" fill="#fff" fill-opacity="0.6"/><rect x="1254.4" y="531.2" width="8.5" height="8.5" rx="1.5" fill="#5a9e8a" stroke="#4a8e7a" stroke-width="0.6"/><text x="1265" y="539.2" font-size="10" fill="#777">RWC</text><rect x="1456" y="503.7" width="192" height="24" rx="4" fill="#e2d96e" stroke="#999" stroke-width="0.9"/><path d="M1480 503.7 H1460 Q1456 503.7 1456 507.7 V523.7 Q1456 527.7 1460 527.7 H1480 Z" fill="#000" fill-opacity="0.05"/><line x1="1480" y1="504.2" x2="1480" y2="527.2" stroke="#000" stroke-opacity="0.1" stroke-dasharray="1 1" stroke-width="0.8"/><g transform="translate(1456 503.7)"><g fill="none" stroke="#fff" stroke-width="1.7"><path d="M5 6.5 H 9 C 12 6.5, 12 17.5, 15 17.5 H 17"/><path d="M5 17.5 H 9 C 12 17.5, 12 6.5, 15 6.5 H 17"/></g><path d="M16.5 3.5 L 20 6.5 L 16.5 9.5 Z M16.5 14.5 L 20 17.5 L 16.5 20.5 Z" fill="#fff"/></g><text x="1486.4" y="519.6" font-size="11.2" font-style="italic" fill="#333">store in msg.downtime_data</text><rect x="1452" y="511.7" width="8" height="8" rx="2.4" fill="#d9d9d9" stroke="#999" stroke-width="0.8"/><rect x="1644" y="511.70000000000005" width="8" height="8" rx="2.4" fill="#d9d9d9" stroke="#999" stroke-width="0.8"/><rect x="1744" y="503.7" width="24" height="24" rx="4" fill="#dddddd" stroke="#999" stroke-width="0.9"/><rect x="1744" y="503.7" width="24" height="24" rx="4" fill="#000" fill-opacity="0.05"/><g transform="translate(1744 503.7)"><path d="M7.4 7.2 H12.35 V3 L16.6 12.1 L12.35 21.4 V17.2 H7.4 V15.6 A3.4 3.4 0 0 0 7.4 8.8 Z" fill="#fff"/><path d="M7.4 10.4 A1.8 1.8 0 0 1 7.4 14" fill="none" stroke="#d3d3d3" stroke-width="1.2"/></g><rect x="1740" y="511.7" width="8" height="8" rx="2.4" fill="#d9d9d9" stroke="#999" stroke-width="0.8"/><rect x="400" y="695.7" width="24" height="24" rx="4" fill="#dddddd" stroke="#999" stroke-width="0.9"/><rect x="400" y="695.7" width="24" height="24" rx="4" fill="#000" fill-opacity="0.05"/><g transform="translate(400 695.7)"><path d="M7.4 7.2 H12.35 V3 L16.6 12.1 L12.35 21.4 V17.2 H7.4 V15.6 A3.4 3.4 0 0 0 7.4 8.8 Z" fill="#fff"/><path d="M7.4 10.4 A1.8 1.8 0 0 1 7.4 14" fill="none" stroke="#d3d3d3" stroke-width="1.2"/></g><rect x="420" y="703.7" width="8" height="8" rx="2.4" fill="#d9d9d9" stroke="#999" stroke-width="0.8"/><rect x="464" y="631.7" width="176" height="24" rx="4" fill="#e2d96e" stroke="#999" stroke-width="0.9"/><path d="M488 631.7 H468 Q464 631.7 464 635.7 V651.7 Q464 655.7 468 655.7 H488 Z" fill="#000" fill-opacity="0.05"/><line x1="488" y1="632.2" x2="488" y2="655.2" stroke="#000" stroke-opacity="0.1" stroke-dasharray="1 1" stroke-width="0.8"/><g transform="translate(464 631.7)"><g fill="none" stroke="#fff" stroke-width="1.7"><path d="M5 6.5 H 9 C 12 6.5, 12 17.5, 15 17.5 H 17"/><path d="M5 17.5 H 9 C 12 17.5, 12 6.5, 15 6.5 H 17"/></g><path d="M16.5 3.5 L 20 6.5 L 16.5 9.5 Z M16.5 14.5 L 20 17.5 L 16.5 20.5 Z" fill="#fff"/></g><text x="494.4" y="647.6" font-size="11.2" font-style="italic" fill="#333">Retrieve Production Data</text><rect x="460" y="639.7" width="8" height="8" rx="2.4" fill="#d9d9d9" stroke="#999" stroke-width="0.8"/><rect x="636" y="639.7" width="8" height="8" rx="2.4" fill="#d9d9d9" stroke="#999" stroke-width="0.8"/><rect x="720" y="631.7" width="80" height="24" rx="4" fill="#e2d96e" stroke="#999" stroke-width="0.9"/><path d="M744 631.7 H724 Q720 631.7 720 635.7 V651.7 Q720 655.7 724 655.7 H744 Z" fill="#000" fill-opacity="0.05"/><line x1="744" y1="632.2" x2="744" y2="655.2" stroke="#000" stroke-opacity="0.1" stroke-dasharray="1 1" stroke-width="0.8"/><g transform="translate(720 631.7)"><g fill="#fff"><rect x="4" y="8" width="4" height="8"/><path d="M9 8 L 12 12 L 9 16 Z"/><rect x="14" y="8" width="2" height="1.6"/><rect x="14" y="11.2" width="2" height="1.6"/><rect x="14" y="14.4" width="2" height="1.6"/><rect x="17" y="8" width="3" height="1.6"/><rect x="17" y="11.2" width="3" height="1.6"/><rect x="17" y="14.4" width="3" height="1.6"/></g></g><text x="750.4" y="647.6" font-size="11.2" font-style="normal" fill="#333">split</text><rect x="716" y="639.7" width="8" height="8" rx="2.4" fill="#d9d9d9" stroke="#999" stroke-width="0.8"/><rect x="796" y="639.7" width="8" height="8" rx="2.4" fill="#d9d9d9" stroke="#999" stroke-width="0.8"/><rect x="912" y="583.7" width="256" height="24" rx="4" fill="#e2d96e" stroke="#999" stroke-width="0.9"/><path d="M936 583.7 H916 Q912 583.7 912 587.7 V603.7 Q912 607.7 916 607.7 H936 Z" fill="#000" fill-opacity="0.05"/><line x1="936" y1="584.2" x2="936" y2="607.2" stroke="#000" stroke-opacity="0.1" stroke-dasharray="1 1" stroke-width="0.8"/><g transform="translate(912 583.7)"><g fill="#fff"><rect x="4" y="8" width="2" height="1.6"/><rect x="4" y="11.2" width="2" height="1.6"/><rect x="4" y="14.4" width="2" height="1.6"/><rect x="7" y="8" width="3" height="1.6"/><rect x="7" y="11.2" width="3" height="1.6"/><rect x="7" y="14.4" width="3" height="1.6"/><path d="M11.5 8 L 14.5 12 L 11.5 16 Z"/><rect x="16" y="8" width="4" height="8"/></g></g><text x="942.4" y="599.6" font-size="11.2" font-style="italic" fill="#333">Calculate the total produced units today</text><rect x="908" y="591.7" width="8" height="8" rx="2.4" fill="#d9d9d9" stroke="#999" stroke-width="0.8"/><rect x="1164" y="591.7" width="8" height="8" rx="2.4" fill="#d9d9d9" stroke="#999" stroke-width="0.8"/><rect x="912" y="615.7" width="288" height="24" rx="4" fill="#e2d96e" stroke="#999" stroke-width="0.9"/><path d="M936 615.7 H916 Q912 615.7 912 619.7 V635.7 Q912 639.7 916 639.7 H936 Z" fill="#000" fill-opacity="0.05"/><line x1="936" y1="616.2" x2="936" y2="639.2" stroke="#000" stroke-opacity="0.1" stroke-dasharray="1 1" stroke-width="0.8"/><g transform="translate(912 615.7)"><g fill="#fff"><rect x="4" y="8" width="2" height="1.6"/><rect x="4" y="11.2" width="2" height="1.6"/><rect x="4" y="14.4" width="2" height="1.6"/><rect x="7" y="8" width="3" height="1.6"/><rect x="7" y="11.2" width="3" height="1.6"/><rect x="7" y="14.4" width="3" height="1.6"/><path d="M11.5 8 L 14.5 12 L 11.5 16 Z"/><rect x="16" y="8" width="4" height="8"/></g></g><text x="942.4" y="631.6" font-size="11.2" font-style="italic" fill="#333">Calculate the total good units produced today.</text><rect x="908" y="623.7" width="8" height="8" rx="2.4" fill="#d9d9d9" stroke="#999" stroke-width="0.8"/><rect x="1196" y="623.7" width="8" height="8" rx="2.4" fill="#d9d9d9" stroke="#999" stroke-width="0.8"/><rect x="912" y="647.7" width="256" height="24" rx="4" fill="#e2d96e" stroke="#999" stroke-width="0.9"/><path d="M936 647.7 H916 Q912 647.7 912 651.7 V667.7 Q912 671.7 916 671.7 H936 Z" fill="#000" fill-opacity="0.05"/><line x1="936" y1="648.2" x2="936" y2="671.2" stroke="#000" stroke-opacity="0.1" stroke-dasharray="1 1" stroke-width="0.8"/><g transform="translate(912 647.7)"><g fill="#fff"><rect x="4" y="8" width="2" height="1.6"/><rect x="4" y="11.2" width="2" height="1.6"/><rect x="4" y="14.4" width="2" height="1.6"/><rect x="7" y="8" width="3" height="1.6"/><rect x="7" y="11.2" width="3" height="1.6"/><rect x="7" y="14.4" width="3" height="1.6"/><path d="M11.5 8 L 14.5 12 L 11.5 16 Z"/><rect x="16" y="8" width="4" height="8"/></g></g><text x="942.4" y="663.6" font-size="11.2" font-style="italic" fill="#333">Calculate the total target output of today.</text><rect x="908" y="655.7" width="8" height="8" rx="2.4" fill="#d9d9d9" stroke="#999" stroke-width="0.8"/><rect x="1164" y="655.7" width="8" height="8" rx="2.4" fill="#d9d9d9" stroke="#999" stroke-width="0.8"/><rect x="1520" y="583.7" width="208" height="24" rx="4" fill="#e2d96e" stroke="#999" stroke-width="0.9"/><path d="M1544 583.7 H1524 Q1520 583.7 1520 587.7 V603.7 Q1520 607.7 1524 607.7 H1544 Z" fill="#000" fill-opacity="0.05"/><line x1="1544" y1="584.2" x2="1544" y2="607.2" stroke="#000" stroke-opacity="0.1" stroke-dasharray="1 1" stroke-width="0.8"/><g transform="translate(1520 583.7)"><g fill="none" stroke="#fff" stroke-width="1.7"><path d="M5 6.5 H 9 C 12 6.5, 12 17.5, 15 17.5 H 17"/><path d="M5 17.5 H 9 C 12 17.5, 12 6.5, 15 6.5 H 17"/></g><path d="M16.5 3.5 L 20 6.5 L 16.5 9.5 Z M16.5 14.5 L 20 17.5 L 16.5 20.5 Z" fill="#fff"/></g><text x="1550.4" y="599.6" font-size="11.2" font-style="normal" fill="#333">set flow.total_produced_units</text><rect x="1516" y="591.7" width="8" height="8" rx="2.4" fill="#d9d9d9" stroke="#999" stroke-width="0.8"/><rect x="1724" y="591.7" width="8" height="8" rx="2.4" fill="#d9d9d9" stroke="#999" stroke-width="0.8"/><rect x="1520" y="615.7" width="176" height="24" rx="4" fill="#e2d96e" stroke="#999" stroke-width="0.9"/><path d="M1544 615.7 H1524 Q1520 615.7 1520 619.7 V635.7 Q1520 639.7 1524 639.7 H1544 Z" fill="#000" fill-opacity="0.05"/><line x1="1544" y1="616.2" x2="1544" y2="639.2" stroke="#000" stroke-opacity="0.1" stroke-dasharray="1 1" stroke-width="0.8"/><g transform="translate(1520 615.7)"><g fill="none" stroke="#fff" stroke-width="1.7"><path d="M5 6.5 H 9 C 12 6.5, 12 17.5, 15 17.5 H 17"/><path d="M5 17.5 H 9 C 12 17.5, 12 6.5, 15 6.5 H 17"/></g><path d="M16.5 3.5 L 20 6.5 L 16.5 9.5 Z M16.5 14.5 L 20 17.5 L 16.5 20.5 Z" fill="#fff"/></g><text x="1550.4" y="631.6" font-size="11.2" font-style="normal" fill="#333">set flow.total_good_units</text><rect x="1516" y="623.7" width="8" height="8" rx="2.4" fill="#d9d9d9" stroke="#999" stroke-width="0.8"/><rect x="1692" y="623.7" width="8" height="8" rx="2.4" fill="#d9d9d9" stroke="#999" stroke-width="0.8"/><rect x="1744" y="615.7" width="24" height="24" rx="4" fill="#dddddd" stroke="#999" stroke-width="0.9"/><rect x="1744" y="615.7" width="24" height="24" rx="4" fill="#000" fill-opacity="0.05"/><g transform="translate(1744 615.7)"><path d="M7.4 7.2 H12.35 V3 L16.6 12.1 L12.35 21.4 V17.2 H7.4 V15.6 A3.4 3.4 0 0 0 7.4 8.8 Z" fill="#fff"/><path d="M7.4 10.4 A1.8 1.8 0 0 1 7.4 14" fill="none" stroke="#d3d3d3" stroke-width="1.2"/></g><rect x="1740" y="623.7" width="8" height="8" rx="2.4" fill="#d9d9d9" stroke="#999" stroke-width="0.8"/><rect x="1520" y="647.7" width="160" height="24" rx="4" fill="#e2d96e" stroke="#999" stroke-width="0.9"/><path d="M1544 647.7 H1524 Q1520 647.7 1520 651.7 V667.7 Q1520 671.7 1524 671.7 H1544 Z" fill="#000" fill-opacity="0.05"/><line x1="1544" y1="648.2" x2="1544" y2="671.2" stroke="#000" stroke-opacity="0.1" stroke-dasharray="1 1" stroke-width="0.8"/><g transform="translate(1520 647.7)"><g fill="none" stroke="#fff" stroke-width="1.7"><path d="M5 6.5 H 9 C 12 6.5, 12 17.5, 15 17.5 H 17"/><path d="M5 17.5 H 9 C 12 17.5, 12 6.5, 15 6.5 H 17"/></g><path d="M16.5 3.5 L 20 6.5 L 16.5 9.5 Z M16.5 14.5 L 20 17.5 L 16.5 20.5 Z" fill="#fff"/></g><text x="1550.4" y="663.6" font-size="11.2" font-style="normal" fill="#333">set flow.target_output</text><rect x="1516" y="655.7" width="8" height="8" rx="2.4" fill="#d9d9d9" stroke="#999" stroke-width="0.8"/><rect x="1676" y="655.7" width="8" height="8" rx="2.4" fill="#d9d9d9" stroke="#999" stroke-width="0.8"/><rect x="464" y="743.7" width="176" height="24" rx="4" fill="#e2d96e" stroke="#999" stroke-width="0.9"/><path d="M488 743.7 H468 Q464 743.7 464 747.7 V763.7 Q464 767.7 468 767.7 H488 Z" fill="#000" fill-opacity="0.05"/><line x1="488" y1="744.2" x2="488" y2="767.2" stroke="#000" stroke-opacity="0.1" stroke-dasharray="1 1" stroke-width="0.8"/><g transform="translate(464 743.7)"><g fill="none" stroke="#fff" stroke-width="1.7"><path d="M5 6.5 H 9 C 12 6.5, 12 17.5, 15 17.5 H 17"/><path d="M5 17.5 H 9 C 12 17.5, 12 6.5, 15 6.5 H 17"/></g><path d="M16.5 3.5 L 20 6.5 L 16.5 9.5 Z M16.5 14.5 L 20 17.5 L 16.5 20.5 Z" fill="#fff"/></g><text x="494.4" y="759.6" font-size="11.2" font-style="italic" fill="#333">Retrieve Downtime Data</text><rect x="460" y="751.7" width="8" height="8" rx="2.4" fill="#d9d9d9" stroke="#999" stroke-width="0.8"/><rect x="636" y="751.7" width="8" height="8" rx="2.4" fill="#d9d9d9" stroke="#999" stroke-width="0.8"/><rect x="720" y="743.7" width="176" height="24" rx="4" fill="#e2d96e" stroke="#999" stroke-width="0.9"/><path d="M744 743.7 H724 Q720 743.7 720 747.7 V763.7 Q720 767.7 724 767.7 H744 Z" fill="#000" fill-opacity="0.05"/><line x1="744" y1="744.2" x2="744" y2="767.2" stroke="#000" stroke-opacity="0.1" stroke-dasharray="1 1" stroke-width="0.8"/><g transform="translate(720 743.7)"><g fill="none" stroke="#fff" stroke-width="1.7"><path d="M4 12 H 9 C 12 12, 12 6, 16 6 H 17"/><path d="M9 12 C 12 12, 12 18, 16 18 H 17"/></g><path d="M16.5 3 L 20 6 L 16.5 9 Z M16.5 15 L 20 18 L 16.5 21 Z" fill="#fff"/></g><text x="750.4" y="759.6" font-size="11.2" font-style="italic" fill="#333">Is Downtime Data Empty?</text><rect x="716" y="751.7" width="8" height="8" rx="2.4" fill="#d9d9d9" stroke="#999" stroke-width="0.8"/><rect x="892" y="746.5" width="8" height="8" rx="2.4" fill="#d9d9d9" stroke="#999" stroke-width="0.8"/><rect x="892" y="756.9000000000001" width="8" height="8" rx="2.4" fill="#d9d9d9" stroke="#999" stroke-width="0.8"/><rect x="976" y="711.7" width="80" height="24" rx="4" fill="#e2d96e" stroke="#999" stroke-width="0.9"/><path d="M1000 711.7 H980 Q976 711.7 976 715.7 V731.7 Q976 735.7 980 735.7 H1000 Z" fill="#000" fill-opacity="0.05"/><line x1="1000" y1="712.2" x2="1000" y2="735.2" stroke="#000" stroke-opacity="0.1" stroke-dasharray="1 1" stroke-width="0.8"/><g transform="translate(976 711.7)"><g fill="#fff"><rect x="4" y="8" width="4" height="8"/><path d="M9 8 L 12 12 L 9 16 Z"/><rect x="14" y="8" width="2" height="1.6"/><rect x="14" y="11.2" width="2" height="1.6"/><rect x="14" y="14.4" width="2" height="1.6"/><rect x="17" y="8" width="3" height="1.6"/><rect x="17" y="11.2" width="3" height="1.6"/><rect x="17" y="14.4" width="3" height="1.6"/></g></g><text x="1006.4" y="727.6" font-size="11.2" font-style="normal" fill="#333">split</text><rect x="972" y="719.7" width="8" height="8" rx="2.4" fill="#d9d9d9" stroke="#999" stroke-width="0.8"/><rect x="1052" y="719.7" width="8" height="8" rx="2.4" fill="#d9d9d9" stroke="#999" stroke-width="0.8"/><rect x="1200" y="711.7" width="240" height="24" rx="4" fill="#e2d96e" stroke="#999" stroke-width="0.9"/><path d="M1224 711.7 H1204 Q1200 711.7 1200 715.7 V731.7 Q1200 735.7 1204 735.7 H1224 Z" fill="#000" fill-opacity="0.05"/><line x1="1224" y1="712.2" x2="1224" y2="735.2" stroke="#000" stroke-opacity="0.1" stroke-dasharray="1 1" stroke-width="0.8"/><g transform="translate(1200 711.7)"><g fill="#fff"><rect x="4" y="8" width="2" height="1.6"/><rect x="4" y="11.2" width="2" height="1.6"/><rect x="4" y="14.4" width="2" height="1.6"/><rect x="7" y="8" width="3" height="1.6"/><rect x="7" y="11.2" width="3" height="1.6"/><rect x="7" y="14.4" width="3" height="1.6"/><path d="M11.5 8 L 14.5 12 L 11.5 16 Z"/><rect x="16" y="8" width="4" height="8"/></g></g><text x="1230.4" y="727.6" font-size="11.2" font-style="italic" fill="#333">Calculate the total downtime duration</text><rect x="1196" y="719.7" width="8" height="8" rx="2.4" fill="#d9d9d9" stroke="#999" stroke-width="0.8"/><rect x="1436" y="719.7" width="8" height="8" rx="2.4" fill="#d9d9d9" stroke="#999" stroke-width="0.8"/><rect x="1520" y="711.7" width="176" height="24" rx="4" fill="#e2d96e" stroke="#999" stroke-width="0.9"/><path d="M1544 711.7 H1524 Q1520 711.7 1520 715.7 V731.7 Q1520 735.7 1524 735.7 H1544 Z" fill="#000" fill-opacity="0.05"/><line x1="1544" y1="712.2" x2="1544" y2="735.2" stroke="#000" stroke-opacity="0.1" stroke-dasharray="1 1" stroke-width="0.8"/><g transform="translate(1520 711.7)"><g fill="none" stroke="#fff" stroke-width="1.7"><path d="M5 6.5 H 9 C 12 6.5, 12 17.5, 15 17.5 H 17"/><path d="M5 17.5 H 9 C 12 17.5, 12 6.5, 15 6.5 H 17"/></g><path d="M16.5 3.5 L 20 6.5 L 16.5 9.5 Z M16.5 14.5 L 20 17.5 L 16.5 20.5 Z" fill="#fff"/></g><text x="1550.4" y="727.6" font-size="11.2" font-style="normal" fill="#333">set flow.total_downtime</text><rect x="1516" y="719.7" width="8" height="8" rx="2.4" fill="#d9d9d9" stroke="#999" stroke-width="0.8"/><rect x="1692" y="719.7" width="8" height="8" rx="2.4" fill="#d9d9d9" stroke="#999" stroke-width="0.8"/><rect x="976" y="775.7" width="176" height="24" rx="4" fill="#e2d96e" stroke="#999" stroke-width="0.9"/><path d="M1000 775.7 H980 Q976 775.7 976 779.7 V795.7 Q976 799.7 980 799.7 H1000 Z" fill="#000" fill-opacity="0.05"/><line x1="1000" y1="776.2" x2="1000" y2="799.2" stroke="#000" stroke-opacity="0.1" stroke-dasharray="1 1" stroke-width="0.8"/><g transform="translate(976 775.7)"><g fill="none" stroke="#fff" stroke-width="1.7"><path d="M5 6.5 H 9 C 12 6.5, 12 17.5, 15 17.5 H 17"/><path d="M5 17.5 H 9 C 12 17.5, 12 6.5, 15 6.5 H 17"/></g><path d="M16.5 3.5 L 20 6.5 L 16.5 9.5 Z M16.5 14.5 L 20 17.5 L 16.5 20.5 Z" fill="#fff"/></g><text x="1006.4" y="791.6" font-size="11.2" font-style="italic" fill="#333">Set Total Downtime to 0</text><rect x="972" y="783.7" width="8" height="8" rx="2.4" fill="#d9d9d9" stroke="#999" stroke-width="0.8"/><rect x="1148" y="783.7" width="8" height="8" rx="2.4" fill="#d9d9d9" stroke="#999" stroke-width="0.8"/><rect x="400" y="855.7" width="24" height="24" rx="4" fill="#dddddd" stroke="#999" stroke-width="0.9"/><rect x="400" y="855.7" width="24" height="24" rx="4" fill="#000" fill-opacity="0.05"/><g transform="translate(400 855.7)"><path d="M7.4 7.2 H12.35 V3 L16.6 12.1 L12.35 21.4 V17.2 H7.4 V15.6 A3.4 3.4 0 0 0 7.4 8.8 Z" fill="#fff"/><path d="M7.4 10.4 A1.8 1.8 0 0 1 7.4 14" fill="none" stroke="#d3d3d3" stroke-width="1.2"/></g><rect x="420" y="863.7" width="8" height="8" rx="2.4" fill="#d9d9d9" stroke="#999" stroke-width="0.8"/><rect x="568" y="855.7" width="368" height="24" rx="4" fill="#e2d96e" stroke="#999" stroke-width="0.9"/><path d="M592 855.7 H572 Q568 855.7 568 859.7 V875.7 Q568 879.7 572 879.7 H592 Z" fill="#000" fill-opacity="0.05"/><line x1="592" y1="856.2" x2="592" y2="879.2" stroke="#000" stroke-opacity="0.1" stroke-dasharray="1 1" stroke-width="0.8"/><g transform="translate(568 855.7)"><g fill="none" stroke="#fff" stroke-width="1.7"><path d="M5 6.5 H 9 C 12 6.5, 12 17.5, 15 17.5 H 17"/><path d="M5 17.5 H 9 C 12 17.5, 12 6.5, 15 6.5 H 17"/></g><path d="M16.5 3.5 L 20 6.5 L 16.5 9.5 Z M16.5 14.5 L 20 17.5 L 16.5 20.5 Z" fill="#fff"/></g><text x="598.4" y="871.6" font-size="11.2" font-style="italic" fill="#333">Calculate OEE and other metrics, then store them in the context.</text><rect x="564" y="863.7" width="8" height="8" rx="2.4" fill="#d9d9d9" stroke="#999" stroke-width="0.8"/><rect x="932" y="863.7" width="8" height="8" rx="2.4" fill="#d9d9d9" stroke="#999" stroke-width="0.8"/><rect x="1200" y="855.7" width="24" height="24" rx="4" fill="#dddddd" stroke="#999" stroke-width="0.9"/><rect x="1200" y="855.7" width="24" height="24" rx="4" fill="#000" fill-opacity="0.05"/><g transform="translate(1200 855.7)"><path d="M7.4 7.2 H12.35 V3 L16.6 12.1 L12.35 21.4 V17.2 H7.4 V15.6 A3.4 3.4 0 0 0 7.4 8.8 Z" fill="#fff"/><path d="M7.4 10.4 A1.8 1.8 0 0 1 7.4 14" fill="none" stroke="#d3d3d3" stroke-width="1.2"/></g><rect x="1196" y="863.7" width="8" height="8" rx="2.4" fill="#d9d9d9" stroke="#999" stroke-width="0.8"/><rect x="568" y="903.7" width="320" height="24" rx="4" fill="#ffffff" stroke="#999" stroke-width="0.9"/><path d="M592 903.7 H572 Q568 903.7 568 907.7 V923.7 Q568 927.7 572 927.7 H592 Z" fill="#f2f2f2" fill-opacity="1"/><line x1="592" y1="904.2" x2="592" y2="927.2" stroke="#000" stroke-opacity="0.1" stroke-dasharray="1 1" stroke-width="0.8"/><g transform="translate(568 903.7)"><path d="M12 6.5 C 16.5 6.5 19 8.5 19 11 C 19 13.5 16.5 15.5 12 15.5 C 11 15.5 10.5 15.5 9.5 15.2 L 6.5 17.5 L 7.3 14.4 C 5.8 13.6 5 12.4 5 11 C 5 8.5 7.5 6.5 12 6.5 Z" fill="none" stroke="#c4c4c4" stroke-width="1"/></g><text x="598.4" y="919.6" font-size="11.2" font-style="italic" fill="#333">Quality = Total Good Units  Produced / Total Target Units</text><rect x="568" y="935.7" width="320" height="24" rx="4" fill="#ffffff" stroke="#999" stroke-width="0.9"/><path d="M592 935.7 H572 Q568 935.7 568 939.7 V955.7 Q568 959.7 572 959.7 H592 Z" fill="#f2f2f2" fill-opacity="1"/><line x1="592" y1="936.2" x2="592" y2="959.2" stroke="#000" stroke-opacity="0.1" stroke-dasharray="1 1" stroke-width="0.8"/><g transform="translate(568 935.7)"><path d="M12 6.5 C 16.5 6.5 19 8.5 19 11 C 19 13.5 16.5 15.5 12 15.5 C 11 15.5 10.5 15.5 9.5 15.2 L 6.5 17.5 L 7.3 14.4 C 5.8 13.6 5 12.4 5 11 C 5 8.5 7.5 6.5 12 6.5 Z" fill="none" stroke="#c4c4c4" stroke-width="1"/></g><text x="598.4" y="951.6" font-size="11.2" font-style="italic" fill="#333">Performance = Total Produced Units / Total Target Units</text><rect x="568" y="967.7" width="400" height="24" rx="4" fill="#ffffff" stroke="#999" stroke-width="0.9"/><path d="M592 967.7 H572 Q568 967.7 568 971.7 V987.7 Q568 991.7 572 991.7 H592 Z" fill="#f2f2f2" fill-opacity="1"/><line x1="592" y1="968.2" x2="592" y2="991.2" stroke="#000" stroke-opacity="0.1" stroke-dasharray="1 1" stroke-width="0.8"/><g transform="translate(568 967.7)"><path d="M12 6.5 C 16.5 6.5 19 8.5 19 11 C 19 13.5 16.5 15.5 12 15.5 C 11 15.5 10.5 15.5 9.5 15.2 L 6.5 17.5 L 7.3 14.4 C 5.8 13.6 5 12.4 5 11 C 5 8.5 7.5 6.5 12 6.5 Z" fill="none" stroke="#c4c4c4" stroke-width="1"/></g><text x="598.4" y="983.6" font-size="11.2" font-style="italic" fill="#333">Availavity = (Total Shift Duration - Total Downtime) / Total Shift Duration</text><rect x="568" y="999.7" width="272" height="24" rx="4" fill="#ffffff" stroke="#999" stroke-width="0.9"/><path d="M592 999.7 H572 Q568 999.7 568 1003.7 V1019.7 Q568 1023.7 572 1023.7 H592 Z" fill="#f2f2f2" fill-opacity="1"/><line x1="592" y1="1000.2" x2="592" y2="1023.2" stroke="#000" stroke-opacity="0.1" stroke-dasharray="1 1" stroke-width="0.8"/><g transform="translate(568 999.7)"><path d="M12 6.5 C 16.5 6.5 19 8.5 19 11 C 19 13.5 16.5 15.5 12 15.5 C 11 15.5 10.5 15.5 9.5 15.2 L 6.5 17.5 L 7.3 14.4 C 5.8 13.6 5 12.4 5 11 C 5 8.5 7.5 6.5 12 6.5 Z" fill="none" stroke="#c4c4c4" stroke-width="1"/></g><text x="598.4" y="1015.6" font-size="11.2" font-style="italic" fill="#333">OEE = (Availability) * (Performance) * (Quality)</text><rect x="400" y="1175.7" width="24" height="24" rx="4" fill="#dddddd" stroke="#999" stroke-width="0.9"/><rect x="400" y="1175.7" width="24" height="24" rx="4" fill="#000" fill-opacity="0.05"/><g transform="translate(400 1175.7)"><path d="M7.4 7.2 H12.35 V3 L16.6 12.1 L12.35 21.4 V17.2 H7.4 V15.6 A3.4 3.4 0 0 0 7.4 8.8 Z" fill="#fff"/><path d="M7.4 10.4 A1.8 1.8 0 0 1 7.4 14" fill="none" stroke="#d3d3d3" stroke-width="1.2"/></g><rect x="420" y="1183.7" width="8" height="8" rx="2.4" fill="#d9d9d9" stroke="#999" stroke-width="0.8"/><rect x="456" y="1143.7" width="176" height="24" rx="4" fill="#e2d96e" stroke="#999" stroke-width="0.9"/><path d="M480 1143.7 H460 Q456 1143.7 456 1147.7 V1163.7 Q456 1167.7 460 1167.7 H480 Z" fill="#000" fill-opacity="0.05"/><line x1="480" y1="1144.2" x2="480" y2="1167.2" stroke="#000" stroke-opacity="0.1" stroke-dasharray="1 1" stroke-width="0.8"/><g transform="translate(456 1143.7)"><g fill="none" stroke="#fff" stroke-width="1.7"><path d="M5 6.5 H 9 C 12 6.5, 12 17.5, 15 17.5 H 17"/><path d="M5 17.5 H 9 C 12 17.5, 12 6.5, 15 6.5 H 17"/></g><path d="M16.5 3.5 L 20 6.5 L 16.5 9.5 Z M16.5 14.5 L 20 17.5 L 16.5 20.5 Z" fill="#fff"/></g><text x="486.4" y="1159.6000000000001" font-size="11.2" font-style="italic" fill="#333">Retrieve Downtime Data</text><rect x="452" y="1151.7" width="8" height="8" rx="2.4" fill="#d9d9d9" stroke="#999" stroke-width="0.8"/><rect x="628" y="1151.7" width="8" height="8" rx="2.4" fill="#d9d9d9" stroke="#999" stroke-width="0.8"/><rect x="688" y="1143.7" width="176" height="24" rx="4" fill="#e2d96e" stroke="#999" stroke-width="0.9"/><path d="M712 1143.7 H692 Q688 1143.7 688 1147.7 V1163.7 Q688 1167.7 692 1167.7 H712 Z" fill="#000" fill-opacity="0.05"/><line x1="712" y1="1144.2" x2="712" y2="1167.2" stroke="#000" stroke-opacity="0.1" stroke-dasharray="1 1" stroke-width="0.8"/><g transform="translate(688 1143.7)"><g fill="none" stroke="#fff" stroke-width="1.7"><path d="M4 12 H 9 C 12 12, 12 6, 16 6 H 17"/><path d="M9 12 C 12 12, 12 18, 16 18 H 17"/></g><path d="M16.5 3 L 20 6 L 16.5 9 Z M16.5 15 L 20 18 L 16.5 21 Z" fill="#fff"/></g><text x="718.4" y="1159.6000000000001" font-size="11.2" font-style="italic" fill="#333">Is Downtime Data Empty?</text><rect x="684" y="1151.7" width="8" height="8" rx="2.4" fill="#d9d9d9" stroke="#999" stroke-width="0.8"/><rect x="860" y="1146.5" width="8" height="8" rx="2.4" fill="#d9d9d9" stroke="#999" stroke-width="0.8"/><rect x="860" y="1156.9" width="8" height="8" rx="2.4" fill="#d9d9d9" stroke="#999" stroke-width="0.8"/><rect x="944" y="1079.7" width="208" height="24" rx="4" fill="#fdd0a2" stroke="#999" stroke-width="0.9"/><path d="M968 1079.7 H948 Q944 1079.7 944 1083.7 V1099.7 Q944 1103.7 948 1103.7 H968 Z" fill="#000" fill-opacity="0.05"/><line x1="968" y1="1080.2" x2="968" y2="1103.2" stroke="#000" stroke-opacity="0.1" stroke-dasharray="1 1" stroke-width="0.8"/><g transform="translate(944 1079.7)"><text x="12" y="18.5" text-anchor="middle" font-size="18" font-style="italic" fill="#fff" style="font-family:'Liberation Serif',serif">f</text></g><text x="974.4" y="1095.6000000000001" font-size="11.2" font-style="italic" fill="#333">Calculate Downtime Summery</text><rect x="940" y="1087.7" width="8" height="8" rx="2.4" fill="#d9d9d9" stroke="#999" stroke-width="0.8"/><rect x="1148" y="1087.7" width="8" height="8" rx="2.4" fill="#d9d9d9" stroke="#999" stroke-width="0.8"/><rect x="944" y="1127.7" width="80" height="24" rx="4" fill="#e2d96e" stroke="#999" stroke-width="0.9"/><path d="M968 1127.7 H948 Q944 1127.7 944 1131.7 V1147.7 Q944 1151.7 948 1151.7 H968 Z" fill="#000" fill-opacity="0.05"/><line x1="968" y1="1128.2" x2="968" y2="1151.2" stroke="#000" stroke-opacity="0.1" stroke-dasharray="1 1" stroke-width="0.8"/><g transform="translate(944 1127.7)"><g fill="#fff"><rect x="4" y="8" width="4" height="8"/><path d="M9 8 L 12 12 L 9 16 Z"/><rect x="14" y="8" width="2" height="1.6"/><rect x="14" y="11.2" width="2" height="1.6"/><rect x="14" y="14.4" width="2" height="1.6"/><rect x="17" y="8" width="3" height="1.6"/><rect x="17" y="11.2" width="3" height="1.6"/><rect x="17" y="14.4" width="3" height="1.6"/></g></g><text x="974.4" y="1143.6000000000001" font-size="11.2" font-style="normal" fill="#333">split</text><rect x="940" y="1135.7" width="8" height="8" rx="2.4" fill="#d9d9d9" stroke="#999" stroke-width="0.8"/><rect x="1020" y="1135.7" width="8" height="8" rx="2.4" fill="#d9d9d9" stroke="#999" stroke-width="0.8"/><rect x="1128" y="1127.7" width="240" height="24" rx="4" fill="#e2d96e" stroke="#999" stroke-width="0.9"/><path d="M1152 1127.7 H1132 Q1128 1127.7 1128 1131.7 V1147.7 Q1128 1151.7 1132 1151.7 H1152 Z" fill="#000" fill-opacity="0.05"/><line x1="1152" y1="1128.2" x2="1152" y2="1151.2" stroke="#000" stroke-opacity="0.1" stroke-dasharray="1 1" stroke-width="0.8"/><g transform="translate(1128 1127.7)"><g fill="#fff"><path d="M6 4 L 10 9 H 7.2 V 20 H 4.8 V 9 H 2 Z" transform="translate(2 0)"/><path d="M14 20 L 18 15 H 15.2 V 4 H 12.8 V 15 H 10 Z" transform="translate(2 0)"/></g></g><text x="1158.4" y="1143.6000000000001" font-size="11.2" font-style="italic" fill="#333">Sort data from most recent to oldest</text><rect x="1124" y="1135.7" width="8" height="8" rx="2.4" fill="#d9d9d9" stroke="#999" stroke-width="0.8"/><rect x="1364" y="1135.7" width="8" height="8" rx="2.4" fill="#d9d9d9" stroke="#999" stroke-width="0.8"/><rect x="1408" y="1127.7" width="240" height="24" rx="4" fill="#e2d96e" stroke="#999" stroke-width="0.9"/><path d="M1432 1127.7 H1412 Q1408 1127.7 1408 1131.7 V1147.7 Q1408 1151.7 1412 1151.7 H1432 Z" fill="#000" fill-opacity="0.05"/><line x1="1432" y1="1128.2" x2="1432" y2="1151.2" stroke="#000" stroke-opacity="0.1" stroke-dasharray="1 1" stroke-width="0.8"/><g transform="translate(1408 1127.7)"><g fill="#fff"><rect x="4" y="8" width="2" height="1.6"/><rect x="4" y="11.2" width="2" height="1.6"/><rect x="4" y="14.4" width="2" height="1.6"/><rect x="7" y="8" width="3" height="1.6"/><rect x="7" y="11.2" width="3" height="1.6"/><rect x="7" y="14.4" width="3" height="1.6"/><path d="M11.5 8 L 14.5 12 L 11.5 16 Z"/><rect x="16" y="8" width="4" height="8"/></g></g><text x="1438.4" y="1143.6000000000001" font-size="11.2" font-style="italic" fill="#333">Combine the data back into an array.</text><rect x="1404" y="1135.7" width="8" height="8" rx="2.4" fill="#d9d9d9" stroke="#999" stroke-width="0.8"/><rect x="1644" y="1135.7" width="8" height="8" rx="2.4" fill="#d9d9d9" stroke="#999" stroke-width="0.8"/><rect x="1720" y="1079.7" width="192" height="24" rx="4" fill="#e2d96e" stroke="#999" stroke-width="0.9"/><path d="M1744 1079.7 H1724 Q1720 1079.7 1720 1083.7 V1099.7 Q1720 1103.7 1724 1103.7 H1744 Z" fill="#000" fill-opacity="0.05"/><line x1="1744" y1="1080.2" x2="1744" y2="1103.2" stroke="#000" stroke-opacity="0.1" stroke-dasharray="1 1" stroke-width="0.8"/><g transform="translate(1720 1079.7)"><g fill="none" stroke="#fff" stroke-width="1.7"><path d="M5 6.5 H 9 C 12 6.5, 12 17.5, 15 17.5 H 17"/><path d="M5 17.5 H 9 C 12 17.5, 12 6.5, 15 6.5 H 17"/></g><path d="M16.5 3.5 L 20 6.5 L 16.5 9.5 Z M16.5 14.5 L 20 17.5 L 16.5 20.5 Z" fill="#fff"/></g><text x="1750.4" y="1095.6000000000001" font-size="11.2" font-style="normal" fill="#333">set msg.downtimeSummery</text><rect x="1716" y="1087.7" width="8" height="8" rx="2.4" fill="#d9d9d9" stroke="#999" stroke-width="0.8"/><rect x="1908" y="1087.7" width="8" height="8" rx="2.4" fill="#d9d9d9" stroke="#999" stroke-width="0.8"/><rect x="1720" y="1127.7" width="176" height="24" rx="4" fill="#e2d96e" stroke="#999" stroke-width="0.9"/><path d="M1744 1127.7 H1724 Q1720 1127.7 1720 1131.7 V1147.7 Q1720 1151.7 1724 1151.7 H1744 Z" fill="#000" fill-opacity="0.05"/><line x1="1744" y1="1128.2" x2="1744" y2="1151.2" stroke="#000" stroke-opacity="0.1" stroke-dasharray="1 1" stroke-width="0.8"/><g transform="translate(1720 1127.7)"><g fill="none" stroke="#fff" stroke-width="1.7"><path d="M5 6.5 H 9 C 12 6.5, 12 17.5, 15 17.5 H 17"/><path d="M5 17.5 H 9 C 12 17.5, 12 6.5, 15 6.5 H 17"/></g><path d="M16.5 3.5 L 20 6.5 L 16.5 9.5 Z M16.5 14.5 L 20 17.5 L 16.5 20.5 Z" fill="#fff"/></g><text x="1750.4" y="1143.6000000000001" font-size="11.2" font-style="normal" fill="#333">set msg.recentDowntime</text><rect x="1716" y="1135.7" width="8" height="8" rx="2.4" fill="#d9d9d9" stroke="#999" stroke-width="0.8"/><rect x="1892" y="1135.7" width="8" height="8" rx="2.4" fill="#d9d9d9" stroke="#999" stroke-width="0.8"/><rect x="1976" y="1127.7" width="24" height="24" rx="4" fill="#dddddd" stroke="#999" stroke-width="0.9"/><rect x="1976" y="1127.7" width="24" height="24" rx="4" fill="#000" fill-opacity="0.05"/><g transform="translate(1976 1127.7)"><path d="M7.4 7.2 H12.35 V3 L16.6 12.1 L12.35 21.4 V17.2 H7.4 V15.6 A3.4 3.4 0 0 0 7.4 8.8 Z" fill="#fff"/><path d="M7.4 10.4 A1.8 1.8 0 0 1 7.4 14" fill="none" stroke="#d3d3d3" stroke-width="1.2"/></g><rect x="1972" y="1135.7" width="8" height="8" rx="2.4" fill="#d9d9d9" stroke="#999" stroke-width="0.8"/><rect x="944" y="1175.7" width="304" height="24" rx="4" fill="#e2d96e" stroke="#999" stroke-width="0.9"/><path d="M968 1175.7 H948 Q944 1175.7 944 1179.7 V1195.7 Q944 1199.7 948 1199.7 H968 Z" fill="#000" fill-opacity="0.05"/><line x1="968" y1="1176.2" x2="968" y2="1199.2" stroke="#000" stroke-opacity="0.1" stroke-dasharray="1 1" stroke-width="0.8"/><g transform="translate(944 1175.7)"><g fill="none" stroke="#fff" stroke-width="1.7"><path d="M5 6.5 H 9 C 12 6.5, 12 17.5, 15 17.5 H 17"/><path d="M5 17.5 H 9 C 12 17.5, 12 6.5, 15 6.5 H 17"/></g><path d="M16.5 3.5 L 20 6.5 L 16.5 9.5 Z M16.5 14.5 L 20 17.5 L 16.5 20.5 Z" fill="#fff"/></g><text x="974.4" y="1191.6000000000001" font-size="11.2" font-style="italic" fill="#333">Set Recent Downtime &amp; Downtime summery to []</text><rect x="940" y="1183.7" width="8" height="8" rx="2.4" fill="#d9d9d9" stroke="#999" stroke-width="0.8"/><rect x="1244" y="1183.7" width="8" height="8" rx="2.4" fill="#d9d9d9" stroke="#999" stroke-width="0.8"/><rect x="1360" y="1175.7" width="24" height="24" rx="4" fill="#dddddd" stroke="#999" stroke-width="0.9"/><rect x="1360" y="1175.7" width="24" height="24" rx="4" fill="#000" fill-opacity="0.05"/><g transform="translate(1360 1175.7)"><path d="M7.4 7.2 H12.35 V3 L16.6 12.1 L12.35 21.4 V17.2 H7.4 V15.6 A3.4 3.4 0 0 0 7.4 8.8 Z" fill="#fff"/><path d="M7.4 10.4 A1.8 1.8 0 0 1 7.4 14" fill="none" stroke="#d3d3d3" stroke-width="1.2"/></g><rect x="1356" y="1183.7" width="8" height="8" rx="2.4" fill="#d9d9d9" stroke="#999" stroke-width="0.8"/><rect x="456" y="1239.7" width="208" height="24" rx="4" fill="#fdd0a2" stroke="#999" stroke-width="0.9"/><path d="M480 1239.7 H460 Q456 1239.7 456 1243.7 V1259.7 Q456 1263.7 460 1263.7 H480 Z" fill="#000" fill-opacity="0.05"/><line x1="480" y1="1240.2" x2="480" y2="1263.2" stroke="#000" stroke-opacity="0.1" stroke-dasharray="1 1" stroke-width="0.8"/><g transform="translate(456 1239.7)"><text x="12" y="18.5" text-anchor="middle" font-size="18" font-style="italic" fill="#fff" style="font-family:'Liberation Serif',serif">f</text></g><text x="486.4" y="1255.6000000000001" font-size="11.2" font-style="italic" fill="#333">Calculate OEE for each machine</text><rect x="452" y="1247.7" width="8" height="8" rx="2.4" fill="#d9d9d9" stroke="#999" stroke-width="0.8"/><rect x="660" y="1247.7" width="8" height="8" rx="2.4" fill="#d9d9d9" stroke="#999" stroke-width="0.8"/><rect x="752" y="1239.7" width="80" height="24" rx="4" fill="#e2d96e" stroke="#999" stroke-width="0.9"/><path d="M776 1239.7 H756 Q752 1239.7 752 1243.7 V1259.7 Q752 1263.7 756 1263.7 H776 Z" fill="#000" fill-opacity="0.05"/><line x1="776" y1="1240.2" x2="776" y2="1263.2" stroke="#000" stroke-opacity="0.1" stroke-dasharray="1 1" stroke-width="0.8"/><g transform="translate(752 1239.7)"><g fill="#fff"><rect x="4" y="8" width="4" height="8"/><path d="M9 8 L 12 12 L 9 16 Z"/><rect x="14" y="8" width="2" height="1.6"/><rect x="14" y="11.2" width="2" height="1.6"/><rect x="14" y="14.4" width="2" height="1.6"/><rect x="17" y="8" width="3" height="1.6"/><rect x="17" y="11.2" width="3" height="1.6"/><rect x="17" y="14.4" width="3" height="1.6"/></g></g><text x="782.4" y="1255.6000000000001" font-size="11.2" font-style="normal" fill="#333">split</text><rect x="748" y="1247.7" width="8" height="8" rx="2.4" fill="#d9d9d9" stroke="#999" stroke-width="0.8"/><rect x="828" y="1247.7" width="8" height="8" rx="2.4" fill="#d9d9d9" stroke="#999" stroke-width="0.8"/><rect x="944" y="1239.7" width="192" height="24" rx="4" fill="#e2d96e" stroke="#999" stroke-width="0.9"/><path d="M968 1239.7 H948 Q944 1239.7 944 1243.7 V1259.7 Q944 1263.7 948 1263.7 H968 Z" fill="#000" fill-opacity="0.05"/><line x1="968" y1="1240.2" x2="968" y2="1263.2" stroke="#000" stroke-opacity="0.1" stroke-dasharray="1 1" stroke-width="0.8"/><g transform="translate(944 1239.7)"><g fill="#fff"><path d="M6 4 L 10 9 H 7.2 V 20 H 4.8 V 9 H 2 Z" transform="translate(2 0)"/><path d="M14 20 L 18 15 H 15.2 V 4 H 12.8 V 15 H 10 Z" transform="translate(2 0)"/></g></g><text x="974.4" y="1255.6000000000001" font-size="11.2" font-style="italic" fill="#333">Sort OEE from worst to best</text><rect x="940" y="1247.7" width="8" height="8" rx="2.4" fill="#d9d9d9" stroke="#999" stroke-width="0.8"/><rect x="1132" y="1247.7" width="8" height="8" rx="2.4" fill="#d9d9d9" stroke="#999" stroke-width="0.8"/><rect x="1408" y="1239.7" width="240" height="24" rx="4" fill="#e2d96e" stroke="#999" stroke-width="0.9"/><path d="M1432 1239.7 H1412 Q1408 1239.7 1408 1243.7 V1259.7 Q1408 1263.7 1412 1263.7 H1432 Z" fill="#000" fill-opacity="0.05"/><line x1="1432" y1="1240.2" x2="1432" y2="1263.2" stroke="#000" stroke-opacity="0.1" stroke-dasharray="1 1" stroke-width="0.8"/><g transform="translate(1408 1239.7)"><g fill="#fff"><rect x="4" y="8" width="2" height="1.6"/><rect x="4" y="11.2" width="2" height="1.6"/><rect x="4" y="14.4" width="2" height="1.6"/><rect x="7" y="8" width="3" height="1.6"/><rect x="7" y="11.2" width="3" height="1.6"/><rect x="7" y="14.4" width="3" height="1.6"/><path d="M11.5 8 L 14.5 12 L 11.5 16 Z"/><rect x="16" y="8" width="4" height="8"/></g></g><text x="1438.4" y="1255.6000000000001" font-size="11.2" font-style="italic" fill="#333">Combine the data back into an array.</text><rect x="1404" y="1247.7" width="8" height="8" rx="2.4" fill="#d9d9d9" stroke="#999" stroke-width="0.8"/><rect x="1644" y="1247.7" width="8" height="8" rx="2.4" fill="#d9d9d9" stroke="#999" stroke-width="0.8"/><rect x="1720" y="1239.7" width="240" height="24" rx="4" fill="#e2d96e" stroke="#999" stroke-width="0.9"/><path d="M1744 1239.7 H1724 Q1720 1239.7 1720 1243.7 V1259.7 Q1720 1263.7 1724 1263.7 H1744 Z" fill="#000" fill-opacity="0.05"/><line x1="1744" y1="1240.2" x2="1744" y2="1263.2" stroke="#000" stroke-opacity="0.1" stroke-dasharray="1 1" stroke-width="0.8"/><g transform="translate(1720 1239.7)"><g fill="none" stroke="#fff" stroke-width="1.7"><path d="M5 6.5 H 9 C 12 6.5, 12 17.5, 15 17.5 H 17"/><path d="M5 17.5 H 9 C 12 17.5, 12 6.5, 15 6.5 H 17"/></g><path d="M16.5 3.5 L 20 6.5 L 16.5 9.5 Z M16.5 14.5 L 20 17.5 L 16.5 20.5 Z" fill="#fff"/></g><text x="1750.4" y="1255.6000000000001" font-size="11.2" font-style="normal" fill="#333">set msg.topUnderPerformingMachines</text><rect x="1716" y="1247.7" width="8" height="8" rx="2.4" fill="#d9d9d9" stroke="#999" stroke-width="0.8"/><rect x="1956" y="1247.7" width="8" height="8" rx="2.4" fill="#d9d9d9" stroke="#999" stroke-width="0.8"/><rect x="395.2" y="1353.3" width="25" height="20.8" rx="4" fill="#eeeef4" stroke="#999" stroke-width="0.8"/><rect x="399.2" y="1357.3" width="12.8" height="12.8" rx="2.4" fill="#a6bbcf" stroke="#999" stroke-width="0.8"/><rect x="416" y="1351.7" width="80" height="24" rx="4" fill="#a6bbcf" stroke="#999" stroke-width="0.9"/><path d="M440 1351.7 H420 Q416 1351.7 416 1355.7 V1371.7 Q416 1375.7 420 1375.7 H440 Z" fill="#000" fill-opacity="0.05"/><line x1="440" y1="1352.2" x2="440" y2="1375.2" stroke="#000" stroke-opacity="0.1" stroke-dasharray="1 1" stroke-width="0.8"/><g transform="translate(416 1351.7)"><path d="M6 8 H 12 V 4.5 L 18.5 12 L 12 19.5 V 16 H 6 V 14 H 13.5 V 15.5 L 16.5 12 L 13.5 8.5 V 10 H 6 Z" fill="#fff"/></g><text x="446.4" y="1367.6000000000001" font-size="11.2" font-style="normal" fill="#333">inject ↻</text><rect x="492" y="1359.7" width="8" height="8" rx="2.4" fill="#d9d9d9" stroke="#999" stroke-width="0.8"/><rect x="584" y="1351.7" width="112" height="24" rx="4" fill="#e2d96e" stroke="#999" stroke-width="0.9"/><path d="M608 1351.7 H588 Q584 1351.7 584 1355.7 V1371.7 Q584 1375.7 588 1375.7 H608 Z" fill="#000" fill-opacity="0.05"/><line x1="608" y1="1352.2" x2="608" y2="1375.2" stroke="#000" stroke-opacity="0.1" stroke-dasharray="1 1" stroke-width="0.8"/><g transform="translate(584 1351.7)"><g fill="none" stroke="#fff" stroke-width="1.7"><path d="M5 6.5 H 9 C 12 6.5, 12 17.5, 15 17.5 H 17"/><path d="M5 17.5 H 9 C 12 17.5, 12 6.5, 15 6.5 H 17"/></g><path d="M16.5 3.5 L 20 6.5 L 16.5 9.5 Z M16.5 14.5 L 20 17.5 L 16.5 20.5 Z" fill="#fff"/></g><text x="614.4" y="1367.6000000000001" font-size="11.2" font-style="italic" fill="#333">Set params</text><rect x="580" y="1359.7" width="8" height="8" rx="2.4" fill="#d9d9d9" stroke="#999" stroke-width="0.8"/><rect x="692" y="1359.7" width="8" height="8" rx="2.4" fill="#d9d9d9" stroke="#999" stroke-width="0.8"/><rect x="840" y="1319.7" width="256" height="24" rx="4" fill="#ffffff" stroke="#999" stroke-width="0.9"/><path d="M864 1319.7 H844 Q840 1319.7 840 1323.7 V1339.7 Q840 1343.7 844 1343.7 H864 Z" fill="#f2f2f2" fill-opacity="1"/><line x1="864" y1="1320.2" x2="864" y2="1343.2" stroke="#000" stroke-opacity="0.1" stroke-dasharray="1 1" stroke-width="0.8"/><g transform="translate(840 1319.7)"><path d="M12 6.5 C 16.5 6.5 19 8.5 19 11 C 19 13.5 16.5 15.5 12 15.5 C 11 15.5 10.5 15.5 9.5 15.2 L 6.5 17.5 L 7.3 14.4 C 5.8 13.6 5 12.4 5 11 C 5 8.5 7.5 6.5 12 6.5 Z" fill="none" stroke="#c4c4c4" stroke-width="1"/></g><text x="870.4" y="1335.6000000000001" font-size="11.2" font-style="italic" fill="#333">Key Instructions: Read Before Proceeding</text><rect x="840" y="1351.7" width="128" height="24" rx="4" fill="#e8800d" stroke="#999" stroke-width="0.9"/><path d="M864 1351.7 H844 Q840 1351.7 840 1355.7 V1371.7 Q840 1375.7 844 1375.7 H864 Z" fill="#000" fill-opacity="0.05"/><line x1="864" y1="1352.2" x2="864" y2="1375.2" stroke="#000" stroke-opacity="0.1" stroke-dasharray="1 1" stroke-width="0.8"/><g transform="translate(840 1351.7)"><path d="M14.5 3.5 C 18 5, 17 10, 13 15 C 11.5 17, 10 19, 9 21 L 8 20.5 C 9 18, 10 15, 11 12 C 12 8, 12.5 5, 14.5 3.5 Z" fill="#fff"/></g><text x="870.4" y="1367.6000000000001" font-size="11.2" font-style="italic" fill="#333">ProductionData</text><rect x="836" y="1359.7" width="8" height="8" rx="2.4" fill="#d9d9d9" stroke="#999" stroke-width="0.8"/><rect x="964" y="1359.7" width="8" height="8" rx="2.4" fill="#d9d9d9" stroke="#999" stroke-width="0.8"/><rect x="846" y="1378.7" width="36" height="12" fill="#fff" fill-opacity="0.6"/><rect x="846.4" y="1379.2" width="8.5" height="8.5" rx="1.5" fill="#5a9e8a" stroke="#4a8e7a" stroke-width="0.6"/><text x="857" y="1387.2" font-size="10" fill="#777">RWC</text><rect x="1096" y="1351.7" width="192" height="24" rx="4" fill="#e2d96e" stroke="#999" stroke-width="0.9"/><path d="M1120 1351.7 H1100 Q1096 1351.7 1096 1355.7 V1371.7 Q1096 1375.7 1100 1375.7 H1120 Z" fill="#000" fill-opacity="0.05"/><line x1="1120" y1="1352.2" x2="1120" y2="1375.2" stroke="#000" stroke-opacity="0.1" stroke-dasharray="1 1" stroke-width="0.8"/><g transform="translate(1096 1351.7)"><g fill="none" stroke="#fff" stroke-width="1.7"><path d="M5 6.5 H 9 C 12 6.5, 12 17.5, 15 17.5 H 17"/><path d="M5 17.5 H 9 C 12 17.5, 12 6.5, 15 6.5 H 17"/></g><path d="M16.5 3.5 L 20 6.5 L 16.5 9.5 Z M16.5 14.5 L 20 17.5 L 16.5 20.5 Z" fill="#fff"/></g><text x="1126.4" y="1367.6000000000001" font-size="11.2" font-style="italic" fill="#333">store in msg.ProductionData</text><rect x="1092" y="1359.7" width="8" height="8" rx="2.4" fill="#d9d9d9" stroke="#999" stroke-width="0.8"/><rect x="1284" y="1359.7" width="8" height="8" rx="2.4" fill="#d9d9d9" stroke="#999" stroke-width="0.8"/><rect x="1320" y="1319.7" width="256" height="24" rx="4" fill="#ffffff" stroke="#999" stroke-width="0.9"/><path d="M1344 1319.7 H1324 Q1320 1319.7 1320 1323.7 V1339.7 Q1320 1343.7 1324 1343.7 H1344 Z" fill="#f2f2f2" fill-opacity="1"/><line x1="1344" y1="1320.2" x2="1344" y2="1343.2" stroke="#000" stroke-opacity="0.1" stroke-dasharray="1 1" stroke-width="0.8"/><g transform="translate(1320 1319.7)"><path d="M12 6.5 C 16.5 6.5 19 8.5 19 11 C 19 13.5 16.5 15.5 12 15.5 C 11 15.5 10.5 15.5 9.5 15.2 L 6.5 17.5 L 7.3 14.4 C 5.8 13.6 5 12.4 5 11 C 5 8.5 7.5 6.5 12 6.5 Z" fill="none" stroke="#c4c4c4" stroke-width="1"/></g><text x="1350.4" y="1335.6000000000001" font-size="11.2" font-style="italic" fill="#333">Key Instructions: Read Before Proceeding</text><rect x="1320" y="1351.7" width="128" height="24" rx="4" fill="#e8800d" stroke="#999" stroke-width="0.9"/><path d="M1344 1351.7 H1324 Q1320 1351.7 1320 1355.7 V1371.7 Q1320 1375.7 1324 1375.7 H1344 Z" fill="#000" fill-opacity="0.05"/><line x1="1344" y1="1352.2" x2="1344" y2="1375.2" stroke="#000" stroke-opacity="0.1" stroke-dasharray="1 1" stroke-width="0.8"/><g transform="translate(1320 1351.7)"><path d="M14.5 3.5 C 18 5, 17 10, 13 15 C 11.5 17, 10 19, 9 21 L 8 20.5 C 9 18, 10 15, 11 12 C 12 8, 12.5 5, 14.5 3.5 Z" fill="#fff"/></g><text x="1350.4" y="1367.6000000000001" font-size="11.2" font-style="italic" fill="#333">DowntimeData</text><rect x="1316" y="1359.7" width="8" height="8" rx="2.4" fill="#d9d9d9" stroke="#999" stroke-width="0.8"/><rect x="1444" y="1359.7" width="8" height="8" rx="2.4" fill="#d9d9d9" stroke="#999" stroke-width="0.8"/><rect x="1326" y="1378.7" width="36" height="12" fill="#fff" fill-opacity="0.6"/><rect x="1326.4" y="1379.2" width="8.5" height="8.5" rx="1.5" fill="#5a9e8a" stroke="#4a8e7a" stroke-width="0.6"/><text x="1337" y="1387.2" font-size="10" fill="#777">RWC</text><rect x="1576" y="1351.7" width="192" height="24" rx="4" fill="#e2d96e" stroke="#999" stroke-width="0.9"/><path d="M1600 1351.7 H1580 Q1576 1351.7 1576 1355.7 V1371.7 Q1576 1375.7 1580 1375.7 H1600 Z" fill="#000" fill-opacity="0.05"/><line x1="1600" y1="1352.2" x2="1600" y2="1375.2" stroke="#000" stroke-opacity="0.1" stroke-dasharray="1 1" stroke-width="0.8"/><g transform="translate(1576 1351.7)"><g fill="none" stroke="#fff" stroke-width="1.7"><path d="M5 6.5 H 9 C 12 6.5, 12 17.5, 15 17.5 H 17"/><path d="M5 17.5 H 9 C 12 17.5, 12 6.5, 15 6.5 H 17"/></g><path d="M16.5 3.5 L 20 6.5 L 16.5 9.5 Z M16.5 14.5 L 20 17.5 L 16.5 20.5 Z" fill="#fff"/></g><text x="1606.4" y="1367.6000000000001" font-size="11.2" font-style="italic" fill="#333">store in msg.DowntimeData</text><rect x="1572" y="1359.7" width="8" height="8" rx="2.4" fill="#d9d9d9" stroke="#999" stroke-width="0.8"/><rect x="1764" y="1359.7" width="8" height="8" rx="2.4" fill="#d9d9d9" stroke="#999" stroke-width="0.8"/><rect x="1800" y="1351.7" width="24" height="24" rx="4" fill="#dddddd" stroke="#999" stroke-width="0.9"/><rect x="1800" y="1351.7" width="24" height="24" rx="4" fill="#000" fill-opacity="0.05"/><g transform="translate(1800 1351.7)"><path d="M7.4 7.2 H12.35 V3 L16.6 12.1 L12.35 21.4 V17.2 H7.4 V15.6 A3.4 3.4 0 0 0 7.4 8.8 Z" fill="#fff"/><path d="M7.4 10.4 A1.8 1.8 0 0 1 7.4 14" fill="none" stroke="#d3d3d3" stroke-width="1.2"/></g><rect x="1796" y="1359.7" width="8" height="8" rx="2.4" fill="#d9d9d9" stroke="#999" stroke-width="0.8"/><rect x="400" y="1431.7" width="24" height="24" rx="4" fill="#dddddd" stroke="#999" stroke-width="0.9"/><rect x="400" y="1431.7" width="24" height="24" rx="4" fill="#000" fill-opacity="0.05"/><g transform="translate(400 1431.7)"><path d="M7.4 7.2 H12.35 V3 L16.6 12.1 L12.35 21.4 V17.2 H7.4 V15.6 A3.4 3.4 0 0 0 7.4 8.8 Z" fill="#fff"/><path d="M7.4 10.4 A1.8 1.8 0 0 1 7.4 14" fill="none" stroke="#d3d3d3" stroke-width="1.2"/></g><rect x="420" y="1439.7" width="8" height="8" rx="2.4" fill="#d9d9d9" stroke="#999" stroke-width="0.8"/><rect x="704" y="1431.7" width="192" height="24" rx="4" fill="#fdd0a2" stroke="#999" stroke-width="0.9"/><path d="M728 1431.7 H708 Q704 1431.7 704 1435.7 V1451.7 Q704 1455.7 708 1455.7 H728 Z" fill="#000" fill-opacity="0.05"/><line x1="728" y1="1432.2" x2="728" y2="1455.2" stroke="#000" stroke-opacity="0.1" stroke-dasharray="1 1" stroke-width="0.8"/><g transform="translate(704 1431.7)"><text x="12" y="18.5" text-anchor="middle" font-size="18" font-style="italic" fill="#fff" style="font-family:'Liberation Serif',serif">f</text></g><text x="734.4" y="1447.6000000000001" font-size="11.2" font-style="italic" fill="#333">calculate OEE for each day</text><rect x="700" y="1439.7" width="8" height="8" rx="2.4" fill="#d9d9d9" stroke="#999" stroke-width="0.8"/><rect x="892" y="1439.7" width="8" height="8" rx="2.4" fill="#d9d9d9" stroke="#999" stroke-width="0.8"/><rect x="1168" y="1431.7" width="144" height="24" rx="4" fill="#e2d96e" stroke="#999" stroke-width="0.9"/><path d="M1192 1431.7 H1172 Q1168 1431.7 1168 1435.7 V1451.7 Q1168 1455.7 1172 1455.7 H1192 Z" fill="#000" fill-opacity="0.05"/><line x1="1192" y1="1432.2" x2="1192" y2="1455.2" stroke="#000" stroke-opacity="0.1" stroke-dasharray="1 1" stroke-width="0.8"/><g transform="translate(1168 1431.7)"><g fill="none" stroke="#fff" stroke-width="1.7"><path d="M5 6.5 H 9 C 12 6.5, 12 17.5, 15 17.5 H 17"/><path d="M5 17.5 H 9 C 12 17.5, 12 6.5, 15 6.5 H 17"/></g><path d="M16.5 3.5 L 20 6.5 L 16.5 9.5 Z M16.5 14.5 L 20 17.5 L 16.5 20.5 Z" fill="#fff"/></g><text x="1198.4" y="1447.6000000000001" font-size="11.2" font-style="normal" fill="#333">set msg.oeeTrend</text><rect x="1164" y="1439.7" width="8" height="8" rx="2.4" fill="#d9d9d9" stroke="#999" stroke-width="0.8"/><rect x="1308" y="1439.7" width="8" height="8" rx="2.4" fill="#d9d9d9" stroke="#999" stroke-width="0.8"/><rect x="1616" y="1431.7" width="24" height="24" rx="4" fill="#dddddd" stroke="#999" stroke-width="0.9"/><rect x="1616" y="1431.7" width="24" height="24" rx="4" fill="#000" fill-opacity="0.05"/><g transform="translate(1616 1431.7)"><path d="M7.4 7.2 H12.35 V3 L16.6 12.1 L12.35 21.4 V17.2 H7.4 V15.6 A3.4 3.4 0 0 0 7.4 8.8 Z" fill="#fff"/><path d="M7.4 10.4 A1.8 1.8 0 0 1 7.4 14" fill="none" stroke="#d3d3d3" stroke-width="1.2"/></g><rect x="1612" y="1439.7" width="8" height="8" rx="2.4" fill="#d9d9d9" stroke="#999" stroke-width="0.8"/><rect x="400" y="1543.7" width="24" height="24" rx="4" fill="#dddddd" stroke="#999" stroke-width="0.9"/><rect x="400" y="1543.7" width="24" height="24" rx="4" fill="#000" fill-opacity="0.05"/><g transform="translate(400 1543.7)"><path d="M7.4 7.2 H12.35 V3 L16.6 12.1 L12.35 21.4 V17.2 H7.4 V15.6 A3.4 3.4 0 0 0 7.4 8.8 Z" fill="#fff"/><path d="M7.4 10.4 A1.8 1.8 0 0 1 7.4 14" fill="none" stroke="#d3d3d3" stroke-width="1.2"/></g><rect x="420" y="1551.7" width="8" height="8" rx="2.4" fill="#d9d9d9" stroke="#999" stroke-width="0.8"/><rect x="624" y="1511.7" width="256" height="24" rx="4" fill="#ffffff" stroke="#999" stroke-width="0.9"/><path d="M648 1511.7 H628 Q624 1511.7 624 1515.7 V1531.7 Q624 1535.7 628 1535.7 H648 Z" fill="#f2f2f2" fill-opacity="1"/><line x1="648" y1="1512.2" x2="648" y2="1535.2" stroke="#000" stroke-opacity="0.1" stroke-dasharray="1 1" stroke-width="0.8"/><g transform="translate(624 1511.7)"><path d="M12 6.5 C 16.5 6.5 19 8.5 19 11 C 19 13.5 16.5 15.5 12 15.5 C 11 15.5 10.5 15.5 9.5 15.2 L 6.5 17.5 L 7.3 14.4 C 5.8 13.6 5 12.4 5 11 C 5 8.5 7.5 6.5 12 6.5 Z" fill="none" stroke="#c4c4c4" stroke-width="1"/></g><text x="654.4" y="1527.6000000000001" font-size="11.2" font-style="italic" fill="#333">Key Instructions: Read Before Proceeding</text><rect x="624" y="1543.7" width="176" height="24" rx="4" fill="#3fadb5" stroke="#999" stroke-width="0.9"/><path d="M776 1543.7 H796 Q800 1543.7 800 1547.7 V1563.7 Q800 1567.7 796 1567.7 H776 Z" fill="#000" fill-opacity="0.05"/><line x1="776" y1="1544.2" x2="776" y2="1567.2" stroke="#000" stroke-opacity="0.1" stroke-dasharray="1 1" stroke-width="0.8"/><g transform="translate(776 1543.7)"><path d="M5 15.5 A 7 7 0 0 1 19 15.5 L 18.6 17 H 5.4 Z" fill="#fff"/><g fill="#3aa4ab"><circle cx="12" cy="10.4" r="0.9"/><circle cx="8.6" cy="11.6" r="0.9"/><circle cx="15.4" cy="11.6" r="0.9"/><circle cx="7" cy="14.6" r="0.9"/><circle cx="17" cy="14.6" r="0.9"/></g><path d="M12.8 11.3 L 11.7 15.4" stroke="#3aa4ab" stroke-width="1"/><circle cx="11.6" cy="15.6" r="1.3" fill="#3aa4ab"/></g><text x="640" y="1559.6000000000001" font-size="11.2" font-style="italic" fill="#333">OEE Dashboard for Line 1</text><rect x="620" y="1551.7" width="8" height="8" rx="2.4" fill="#d9d9d9" stroke="#999" stroke-width="0.8"/></svg><div style="position:absolute;left:2354px;top:186px;width:24px;height:1484px;background:#f3f3fb;"></div><div style="position:absolute;left:360px;top:1646px;width:1994px;height:24px;background:#f3f3fb;"></div><div style="position:absolute;left:2360px;top:194px;width:12px;height:320px;background:#80808c;border-radius:6px;"></div><div style="position:absolute;left:366px;top:1652px;width:610px;height:12px;background:#80808c;border-radius:6px;"></div><div style="position:absolute;left:360px;top:1670px;width:2018px;height:2px;background:#b3b3c0;"></div><div style="position:absolute;left:360px;top:1672px;width:2018px;height:50px;background:#f3f3fb;"></div><div style="position:absolute;left:360px;top:1722px;width:2020px;height:2px;background:#b3b3c0;"></div><div style="position:absolute;left:380px;top:1678px;width:34px;height:34px;border:2px solid #c3c3cf;background:#fff;"></div><svg style="position:absolute;left:384px;top:1682px;" width="30" height="30" viewBox="0 0 30 30"><circle cx="13" cy="13" r="7.5" fill="none" stroke="#7b7d89" stroke-width="3"/><path d="M18.5 18.5 L 24 24" stroke="#7b7d89" stroke-width="3.5" stroke-linecap="round"/></svg><div style="position:absolute;left:2198px;top:1678px;width:34px;height:34px;border:2px solid #c3c3cf;background:#fff;"></div><svg style="position:absolute;left:2198px;top:1678px;" width="38" height="38" viewBox="0 0 38 38"><path d="M7 12 L 15 8.5 L 23 12 L 31 8.5 V 26 L 23 29.5 L 15 26 L 7 29.5 Z M15 8.5 V 26 M23 12 V 29.5" fill="none" stroke="#7b7d89" stroke-width="1.6" stroke-linejoin="round"/></svg><div style="position:absolute;left:2244px;top:1678px;width:110px;height:34px;border:2px solid #c3c3cf;background:#fff;"></div><div style="position:absolute;left:2281px;top:1678px;width:2px;height:38px;background:#c3c3cf;"></div><div style="position:absolute;left:2319px;top:1678px;width:2px;height:38px;background:#c3c3cf;"></div><svg style="position:absolute;left:2244px;top:1678px;" width="38" height="38" viewBox="0 0 38 38"><path d="M11 19 H 27" stroke="#7b7d89" stroke-width="4" stroke-linecap="round"/></svg><svg style="position:absolute;left:2282px;top:1678px;" width="38" height="38" viewBox="0 0 38 38"><circle cx="19.5" cy="19" r="8.5" fill="none" stroke="#7b7d89" stroke-width="2.5"/></svg><svg style="position:absolute;left:2320px;top:1678px;" width="38" height="38" viewBox="0 0 38 38"><path d="M19 10 V 28 M10 19 H 28" stroke="#7b7d89" stroke-width="4" stroke-linecap="round"/></svg><div style="position:absolute;left:2380px;top:116px;width:15px;height:1608px;background:#f3f3fb;"></div><div style="position:absolute;left:2384px;top:864px;width:6px;height:100px;background:#c2c2ca;"></div><div style="position:absolute;left:2395px;top:116px;width:2px;height:1608px;background:#b3b3c0;"></div><div style="position:absolute;left:3022px;top:116px;width:2px;height:1608px;background:#b3b3c0;"></div><div style="position:absolute;left:2397px;top:116px;width:625px;height:68px;background:#fff;"></div><div style="position:absolute;left:2397px;top:184px;width:625px;height:2px;background:#b3b3c0;"></div><div style="position:absolute;left:2402px;top:122px;width:262px;height:64px;border:2px solid #b3b3c0;border-bottom:none;background:#fff;overflow:hidden;"><div style="position:absolute;left:62px;top:17px;font-size:27.8px;line-height:28px;color:#4b656f;font-weight:bold;white-space:nowrap;">Dashboard 2.0</div><div style="position:absolute;right:0;top:0;width:40px;height:100%;background:linear-gradient(to right,rgba(255,255,255,0),#fff 90%);"></div></div><svg style="position:absolute;left:2426px;top:140px;" width="36" height="28" viewBox="0 0 36 28"><path d="M2 2 V 26 H 34" fill="none" stroke="#4b656f" stroke-width="2.2"/><g fill="#4b656f"><rect x="7" y="14" width="4" height="9"/><rect x="14" y="9" width="4" height="14"/><rect x="21" y="12" width="4" height="11"/><rect x="28" y="5" width="4" height="18"/></g></svg><div style="position:absolute;left:2688px;top:124px;width:52px;height:52px;border:2px solid #c3c3cf;background:#fff;border-radius:0px;"></div><div style="position:absolute;left:2756px;top:124px;width:52px;height:52px;border:2px solid #c3c3cf;background:#fff;border-radius:0px;"></div><div style="position:absolute;left:2824px;top:124px;width:52px;height:52px;border:2px solid #c3c3cf;background:#fff;border-radius:0px;"></div><div style="position:absolute;left:2892px;top:124px;width:52px;height:52px;border:2px solid #c3c3cf;background:#fff;border-radius:0px;"></div><svg style="position:absolute;left:2700px;top:136px;" width="32" height="32" viewBox="0 0 32 32"><circle cx="16" cy="7" r="3.6" fill="#7b7d89"/><path d="M11 13 H 18.5 V 23.5 H 21 V 27 H 11 V 23.5 H 13.5 V 16.5 H 11 Z" fill="#7b7d89"/></svg><svg style="position:absolute;left:2768px;top:136px;" width="32" height="32" viewBox="0 0 32 32"><path d="M9 5 H 27 L 22 24 H 4 Z" fill="#7b7d89"/><path d="M4 24 Q 2 28 6 28 H 22 L 23 26 H 7 Q 5 26 6 24" fill="none" stroke="#7b7d89" stroke-width="2"/><path d="M11 9 H 22 M10 12.5 H 21" stroke="#fff" stroke-width="1.8"/></svg><svg style="position:absolute;left:2836px;top:136px;" width="32" height="32" viewBox="0 0 32 32"><g fill="#7b7d89"><ellipse cx="16" cy="8.5" rx="6" ry="4"/><path d="M8 12 H 24 V 20 Q 24 28 16 28 Q 8 28 8 20 Z"/></g><g stroke="#7b7d89" stroke-width="2.4" fill="none"><path d="M8 15 H 2 M24 15 H 30 M8 21 L 3 25 M24 21 L 29 25 M9 11 L 4 7 M23 11 L 28 7"/></g><path d="M16 13 V 27" stroke="#fff" stroke-width="1.5"/></svg><svg style="position:absolute;left:2904px;top:136px;" width="32" height="32" viewBox="0 0 32 32"><g transform="translate(4 4)"><path fill="#7b7d89" d="M10.5 1 h3 l.6 2.9 a8.6 8.6 0 0 1 2.3 1 l2.5-1.6 2.1 2.1-1.6 2.5 a8.6 8.6 0 0 1 1 2.3 l2.9.6 v3 l-2.9.6 a8.6 8.6 0 0 1-1 2.3 l1.6 2.5-2.1 2.1-2.5-1.6 a8.6 8.6 0 0 1-2.3 1 l-.6 2.9 h-3 l-.6-2.9 a8.6 8.6 0 0 1-2.3-1 l-2.5 1.6-2.1-2.1 1.6-2.5 a8.6 8.6 0 0 1-1-2.3 L1 13.5 v-3 l2.9-.6 a8.6 8.6 0 0 1 1-2.3 L3.3 5.1 5.4 3 l2.5 1.6 a8.6 8.6 0 0 1 2.3-1 Z M12 8 a4 4 0 1 0 0 8 a4 4 0 1 0 0-8 Z"/></g></svg><svg style="position:absolute;left:2978px;top:146px;" width="20" height="12" viewBox="0 0 20 12"><path d="M1 1 H 19 L 10 11 Z" fill="#7b7d89"/></svg><div style="position:absolute;left:2397px;top:186px;width:625px;height:1484px;background:#f3f3fb;"></div><div style="position:absolute;left:2397px;top:261px;width:599px;height:1409px;background:#fdfdff;"></div><div style="position:absolute;left:2397px;top:186px;width:599px;height:75px;background:#f3f3fb;"></div><div style="position:absolute;left:2398px;top:260px;width:598px;height:2px;background:#d2d2dc;"></div><div style="position:absolute;left:3002px;top:194px;width:12px;height:1182px;background:#80808c;border-radius:6px;"></div><div style="position:absolute;left:2418.5px;top:209.80px;font-size:28px;line-height:28px;color:#2b2b33;font-weight:normal;font-style:normal;white-space:nowrap;">My Dashboard</div><div style="position:absolute;left:2602px;top:204px;width:162px;height:36px;border:2px solid #c3c3cf;background:#fff;border-radius:4px;"></div><div style="position:absolute;left:2616px;top:214.90px;font-size:20.2px;line-height:20.2px;color:#7b7d89;font-weight:normal;font-style:normal;white-space:nowrap;">Edit Settings</div><svg style="position:absolute;left:2737px;top:212px;" width="24" height="24" viewBox="0 0 24 24"><g transform="translate(2.5 2.5) scale(0.8)"><path fill="#7b7d89" d="M10.5 1 h3 l.6 2.9 a8.6 8.6 0 0 1 2.3 1 l2.5-1.6 2.1 2.1-1.6 2.5 a8.6 8.6 0 0 1 1 2.3 l2.9.6 v3 l-2.9.6 a8.6 8.6 0 0 1-1 2.3 l1.6 2.5-2.1 2.1-2.5-1.6 a8.6 8.6 0 0 1-2.3 1 l-.6 2.9 h-3 l-.6-2.9 a8.6 8.6 0 0 1-2.3-1 l-2.5 1.6-2.1-2.1 1.6-2.5 a8.6 8.6 0 0 1-1-2.3 L1 13.5 v-3 l2.9-.6 a8.6 8.6 0 0 1 1-2.3 L3.3 5.1 5.4 3 l2.5 1.6 a8.6 8.6 0 0 1 2.3-1 Z M12 8 a4 4 0 1 0 0 8 a4 4 0 1 0 0-8 Z"/></g></svg><div style="position:absolute;left:2776px;top:204px;width:204px;height:36px;border:2px solid #c3c3cf;background:#fff;border-radius:4px;"></div><div style="position:absolute;left:2788px;top:214.90px;font-size:20.2px;line-height:20.2px;color:#7b7d89;font-weight:normal;font-style:normal;white-space:nowrap;">Open Dashboard</div><svg style="position:absolute;left:2950px;top:212px;" width="26" height="26" viewBox="0 0 26 26"><path d="M11 5 H 4 V 21 H 20 V 14" fill="none" stroke="#7b7d89" stroke-width="2.2"/><path d="M10 15 L 21 4 M14 3.5 H 21.5 V 11" fill="none" stroke="#7b7d89" stroke-width="2.4"/></svg><div style="position:absolute;left:2398px;top:329.5px;width:598px;height:2.0px;background:#b3b3c0;"></div><div style="position:absolute;left:2404px;top:268px;width:175px;height:64px;border:2px solid #b3b3c0;border-bottom:none;background:#fdfdff;"></div><div style="position:absolute;left:2431px;top:285.89px;font-size:27.3px;line-height:27.3px;color:#4b656f;font-weight:bold;font-style:normal;white-space:nowrap;">Layout</div><div style="position:absolute;left:2596px;top:268px;width:176px;height:62px;border:2px solid #b3b3c0;border-bottom:none;background:#e9ebf8;"></div><div style="position:absolute;left:2621.5px;top:283.55px;font-size:27.7px;line-height:27.7px;color:#5b6b7c;font-weight:normal;font-style:normal;white-space:nowrap;">Theming</div><div style="position:absolute;left:2788px;top:268px;width:186px;height:62px;border:2px solid #b3b3c0;border-bottom:none;background:#e9ebf8;"></div><div style="position:absolute;left:2814px;top:283.55px;font-size:27.7px;line-height:27.7px;color:#5b6b7c;font-weight:normal;font-style:normal;white-space:nowrap;">Client Data</div><div style="position:absolute;left:2418.5px;top:354.55px;font-size:27.7px;line-height:27.7px;color:#2b2b33;font-weight:bold;font-style:normal;white-space:nowrap;">Pages</div><div style="position:absolute;left:2698px;top:349px;width:36px;height:35px;border:2px solid #c3c3cf;background:#fff;border-radius:4px;"></div><div style="position:absolute;left:2746px;top:349px;width:36px;height:35px;border:2px solid #c3c3cf;background:#fff;border-radius:4px;"></div><div style="position:absolute;left:2794px;top:349px;width:79px;height:35px;border:2px solid #c3c3cf;background:#fff;border-radius:4px;"></div><div style="position:absolute;left:2885px;top:349px;width:87px;height:35px;border:2px solid #c3c3cf;background:#fff;border-radius:4px;"></div><svg style="position:absolute;left:2706px;top:357px;" width="24" height="24" viewBox="0 0 24 24"><path d="M7 13 L 12 8 L 17 13 M7 18 L 12 13 L 17 18" fill="none" stroke="#7b7d89" stroke-width="2.2"/></svg><svg style="position:absolute;left:2754px;top:357px;" width="24" height="24" viewBox="0 0 24 24"><path d="M7 6 L 12 11 L 17 6 M7 11 L 12 16 L 17 11" fill="none" stroke="#7b7d89" stroke-width="2.2"/></svg><svg style="position:absolute;left:2804px;top:357px;" width="20" height="20" viewBox="0 0 20 20"><path d="M10 3 V 17 M3 10 H 17" stroke="#7b7d89" stroke-width="3.6"/></svg><div style="position:absolute;left:2827.5px;top:360.40px;font-size:20.2px;line-height:20.2px;color:#7b7d89;font-weight:normal;font-style:normal;white-space:nowrap;">Link</div><svg style="position:absolute;left:2895px;top:357px;" width="20" height="20" viewBox="0 0 20 20"><path d="M10 3 V 17 M3 10 H 17" stroke="#7b7d89" stroke-width="3.6"/></svg><div style="position:absolute;left:2918.5px;top:360.40px;font-size:20.2px;line-height:20.2px;color:#7b7d89;font-weight:normal;font-style:normal;white-space:nowrap;">Page</div><div style="position:absolute;left:2418.5px;top:411.88px;font-size:21.4px;line-height:21.4px;color:#9a9ca6;font-weight:normal;font-style:italic;white-space:nowrap;">Here you can re-order and move your widgets, groups and</div><div style="position:absolute;left:2418.5px;top:443.38px;font-size:21.4px;line-height:21.4px;color:#9a9ca6;font-weight:normal;font-style:italic;white-space:nowrap;">pages.</div><div style="position:absolute;left:2418px;top:488px;width:554px;height:1200px;border:2px solid #c3c3cf;border-top:3px solid #b0b0bc;border-radius:6px 6px 0 0;background:#fdfdff;"></div><div style="position:absolute;left:2420px;top:567.5px;width:553px;height:2.0px;background:#c3c3cf;"></div><svg style="position:absolute;left:2466px;top:521px;" width="20" height="14" viewBox="0 0 20 14"><path d="M2 2 L 9 9 L 16 2" fill="none" stroke="#2b2b33" stroke-width="2.4"/></svg><svg style="position:absolute;left:2496px;top:512px;" width="36" height="36" viewBox="0 0 36 36"><g fill="none" stroke="#2b2b33" stroke-width="2"><rect x="4" y="4" width="28" height="28"/><rect x="9" y="9" width="13" height="11"/><rect x="14" y="14" width="13" height="11"/></g><g fill="#fff" stroke="#2b2b33" stroke-width="1.8"><rect x="1" y="1" width="6" height="6"/><rect x="29" y="1" width="6" height="6"/><rect x="1" y="29" width="6" height="6"/><rect x="29" y="29" width="6" height="6"/></g></svg><div style="position:absolute;left:2543.5px;top:516.64px;font-size:27px;line-height:27px;color:#2b2b33;font-weight:normal;font-style:normal;white-space:nowrap;">Line-1</div><div style="position:absolute;left:2632px;top:519.18px;font-size:24px;line-height:24px;color:#9a9ca6;font-weight:normal;font-style:normal;white-space:nowrap;">9 Groups</div><div style="position:absolute;left:2847px;top:510.5px;width:40px;height:35.0px;border:2px solid #c8c8d2;background:#fff;border-radius:4px;"></div><svg style="position:absolute;left:2857px;top:518px;" width="24" height="24" viewBox="0 0 24 24"><path d="M2 12 C 6 5, 18 5, 22 12 C 18 19, 6 19, 2 12 Z" fill="none" stroke="#7b7d89" stroke-width="1.8"/><circle cx="12" cy="12" r="4" fill="#7b7d89"/><circle cx="10.5" cy="10.5" r="1.3" fill="#fff"/></svg><div style="position:absolute;left:2899px;top:510.5px;width:39px;height:35.0px;border:2px solid #c8c8d2;background:#fff;border-radius:4px;"></div><svg style="position:absolute;left:2908px;top:518px;" width="24" height="24" viewBox="0 0 24 24"><rect x="3" y="11" width="12" height="10" rx="1" fill="#7b7d89"/><path d="M12 11 V 7.5 A 4.2 4.2 0 0 1 20.4 7.5 V 9" fill="none" stroke="#7b7d89" stroke-width="2.6"/></svg><svg style="position:absolute;left:2515px;top:602px;" width="20" height="14" viewBox="0 0 20 14"><path d="M2 2 L 9 9 L 16 2" fill="none" stroke="#2b2b33" stroke-width="2.4"/></svg><svg style="position:absolute;left:2545px;top:595.5px;" width="30" height="26" viewBox="0 0 30 26"><g fill="none" stroke="#2b2b33" stroke-width="2.4"><rect x="1.5" y="1.5" width="25" height="21" rx="1.5"/><path d="M1.5 8.3 H 26.5 M1.5 15.3 H 26.5 M10 1.5 V 22.5 M18 1.5 V 22.5"/></g></svg><div style="position:absolute;left:2584px;top:594.89px;font-size:27.3px;line-height:27.3px;color:#2b2b33;font-weight:normal;font-style:normal;white-space:nowrap;">OEE Group</div><div style="position:absolute;left:2738px;top:596.85px;font-size:23.8px;line-height:23.8px;color:#9a9ca6;font-weight:normal;font-style:normal;white-space:nowrap;">1 Widgets</div><div style="position:absolute;left:2847px;top:588.5px;width:40px;height:35.0px;border:2px solid #c8c8d2;background:#fff;border-radius:4px;"></div><svg style="position:absolute;left:2857px;top:596px;" width="24" height="24" viewBox="0 0 24 24"><path d="M2 12 C 6 5, 18 5, 22 12 C 18 19, 6 19, 2 12 Z" fill="none" stroke="#7b7d89" stroke-width="1.8"/><circle cx="12" cy="12" r="4" fill="#7b7d89"/><circle cx="10.5" cy="10.5" r="1.3" fill="#fff"/></svg><div style="position:absolute;left:2899px;top:588.5px;width:39px;height:35.0px;border:2px solid #c8c8d2;background:#fff;border-radius:4px;"></div><svg style="position:absolute;left:2908px;top:596px;" width="24" height="24" viewBox="0 0 24 24"><rect x="3" y="11" width="12" height="10" rx="1" fill="#7b7d89"/><path d="M12 11 V 7.5 A 4.2 4.2 0 0 1 20.4 7.5 V 9" fill="none" stroke="#7b7d89" stroke-width="2.6"/></svg><svg style="position:absolute;left:2579px;top:671.5px;" width="30" height="30" viewBox="0 0 30 30"><path d="M3 24 A 14 14 0 1 1 27 24 Z" fill="#2b2b33"/><g fill="#fff"><circle cx="15" cy="5.5" r="1.8"/><circle cx="8.2" cy="8.3" r="1.8"/><circle cx="21.8" cy="8.3" r="1.8"/><circle cx="5.3" cy="15" r="1.8"/><circle cx="24.7" cy="15" r="1.8"/></g><path d="M17 8.5 L 14.6 18" stroke="#fff" stroke-width="2.4" stroke-linecap="round"/><circle cx="14.4" cy="19.5" r="2.9" fill="#fff"/></svg><div style="position:absolute;left:2620.5px;top:669.81px;font-size:27.4px;line-height:27.4px;color:#2b2b33;font-weight:normal;font-style:normal;white-space:nowrap;">OEE Dashboard for Line 1</div><svg style="position:absolute;left:2515px;top:754px;" width="20" height="14" viewBox="0 0 20 14"><path d="M2 2 L 9 9 L 16 2" fill="none" stroke="#2b2b33" stroke-width="2.4"/></svg><svg style="position:absolute;left:2545px;top:747.5px;" width="30" height="26" viewBox="0 0 30 26"><g fill="none" stroke="#2b2b33" stroke-width="2.4"><rect x="1.5" y="1.5" width="25" height="21" rx="1.5"/><path d="M1.5 8.3 H 26.5 M1.5 15.3 H 26.5 M10 1.5 V 22.5 M18 1.5 V 22.5"/></g></svg><div style="position:absolute;left:2584px;top:746.89px;font-size:27.3px;line-height:27.3px;color:#2b2b33;font-weight:normal;font-style:normal;white-space:nowrap;">Performance Group</div><div style="position:absolute;left:2843px;top:748.85px;font-size:23.8px;line-height:23.8px;color:#9a9ca6;font-weight:normal;font-style:normal;white-space:nowrap;">1 Widgets</div><div style="position:absolute;left:2847px;top:740.5px;width:40px;height:35.0px;border:2px solid #c8c8d2;background:#fff;border-radius:4px;"></div><svg style="position:absolute;left:2857px;top:748px;" width="24" height="24" viewBox="0 0 24 24"><path d="M2 12 C 6 5, 18 5, 22 12 C 18 19, 6 19, 2 12 Z" fill="none" stroke="#7b7d89" stroke-width="1.8"/><circle cx="12" cy="12" r="4" fill="#7b7d89"/><circle cx="10.5" cy="10.5" r="1.3" fill="#fff"/></svg><div style="position:absolute;left:2899px;top:740.5px;width:39px;height:35.0px;border:2px solid #c8c8d2;background:#fff;border-radius:4px;"></div><svg style="position:absolute;left:2908px;top:748px;" width="24" height="24" viewBox="0 0 24 24"><rect x="3" y="11" width="12" height="10" rx="1" fill="#7b7d89"/><path d="M12 11 V 7.5 A 4.2 4.2 0 0 1 20.4 7.5 V 9" fill="none" stroke="#7b7d89" stroke-width="2.6"/></svg><svg style="position:absolute;left:2579px;top:824.5px;" width="30" height="30" viewBox="0 0 30 30"><path d="M3 24 A 14 14 0 1 1 27 24 Z" fill="#2b2b33"/><g fill="#fff"><circle cx="15" cy="5.5" r="1.8"/><circle cx="8.2" cy="8.3" r="1.8"/><circle cx="21.8" cy="8.3" r="1.8"/><circle cx="5.3" cy="15" r="1.8"/><circle cx="24.7" cy="15" r="1.8"/></g><path d="M17 8.5 L 14.6 18" stroke="#fff" stroke-width="2.4" stroke-linecap="round"/><circle cx="14.4" cy="19.5" r="2.9" fill="#fff"/></svg><div style="position:absolute;left:2620.5px;top:822.81px;font-size:27.4px;line-height:27.4px;color:#2b2b33;font-weight:normal;font-style:normal;white-space:nowrap;">OEE Dashboard for Line 1</div><svg style="position:absolute;left:2515px;top:906px;" width="20" height="14" viewBox="0 0 20 14"><path d="M2 2 L 9 9 L 16 2" fill="none" stroke="#2b2b33" stroke-width="2.4"/></svg><svg style="position:absolute;left:2545px;top:899.5px;" width="30" height="26" viewBox="0 0 30 26"><g fill="none" stroke="#2b2b33" stroke-width="2.4"><rect x="1.5" y="1.5" width="25" height="21" rx="1.5"/><path d="M1.5 8.3 H 26.5 M1.5 15.3 H 26.5 M10 1.5 V 22.5 M18 1.5 V 22.5"/></g></svg><div style="position:absolute;left:2584px;top:898.89px;font-size:27.3px;line-height:27.3px;color:#2b2b33;font-weight:normal;font-style:normal;white-space:nowrap;">Availability Group</div><div style="position:absolute;left:2814.5px;top:900.85px;font-size:23.8px;line-height:23.8px;color:#9a9ca6;font-weight:normal;font-style:normal;white-space:nowrap;">1 Widgets</div><div style="position:absolute;left:2847px;top:892.5px;width:40px;height:35.0px;border:2px solid #c8c8d2;background:#fff;border-radius:4px;"></div><svg style="position:absolute;left:2857px;top:900px;" width="24" height="24" viewBox="0 0 24 24"><path d="M2 12 C 6 5, 18 5, 22 12 C 18 19, 6 19, 2 12 Z" fill="none" stroke="#7b7d89" stroke-width="1.8"/><circle cx="12" cy="12" r="4" fill="#7b7d89"/><circle cx="10.5" cy="10.5" r="1.3" fill="#fff"/></svg><div style="position:absolute;left:2899px;top:892.5px;width:39px;height:35.0px;border:2px solid #c8c8d2;background:#fff;border-radius:4px;"></div><svg style="position:absolute;left:2908px;top:900px;" width="24" height="24" viewBox="0 0 24 24"><rect x="3" y="11" width="12" height="10" rx="1" fill="#7b7d89"/><path d="M12 11 V 7.5 A 4.2 4.2 0 0 1 20.4 7.5 V 9" fill="none" stroke="#7b7d89" stroke-width="2.6"/></svg><svg style="position:absolute;left:2579px;top:976.0px;" width="30" height="30" viewBox="0 0 30 30"><path d="M3 24 A 14 14 0 1 1 27 24 Z" fill="#2b2b33"/><g fill="#fff"><circle cx="15" cy="5.5" r="1.8"/><circle cx="8.2" cy="8.3" r="1.8"/><circle cx="21.8" cy="8.3" r="1.8"/><circle cx="5.3" cy="15" r="1.8"/><circle cx="24.7" cy="15" r="1.8"/></g><path d="M17 8.5 L 14.6 18" stroke="#fff" stroke-width="2.4" stroke-linecap="round"/><circle cx="14.4" cy="19.5" r="2.9" fill="#fff"/></svg><div style="position:absolute;left:2620.5px;top:974.31px;font-size:27.4px;line-height:27.4px;color:#2b2b33;font-weight:normal;font-style:normal;white-space:nowrap;">OEE Dashboard for Line 1</div><svg style="position:absolute;left:2515px;top:1057.5px;" width="20" height="14" viewBox="0 0 20 14"><path d="M2 2 L 9 9 L 16 2" fill="none" stroke="#2b2b33" stroke-width="2.4"/></svg><svg style="position:absolute;left:2545px;top:1051.0px;" width="30" height="26" viewBox="0 0 30 26"><g fill="none" stroke="#2b2b33" stroke-width="2.4"><rect x="1.5" y="1.5" width="25" height="21" rx="1.5"/><path d="M1.5 8.3 H 26.5 M1.5 15.3 H 26.5 M10 1.5 V 22.5 M18 1.5 V 22.5"/></g></svg><div style="position:absolute;left:2584px;top:1050.39px;font-size:27.3px;line-height:27.3px;color:#2b2b33;font-weight:normal;font-style:normal;white-space:nowrap;">Quality Group</div><div style="position:absolute;left:2771px;top:1052.35px;font-size:23.8px;line-height:23.8px;color:#9a9ca6;font-weight:normal;font-style:normal;white-space:nowrap;">1 Widgets</div><div style="position:absolute;left:2847px;top:1044.0px;width:40px;height:35.0px;border:2px solid #c8c8d2;background:#fff;border-radius:4px;"></div><svg style="position:absolute;left:2857px;top:1051.5px;" width="24" height="24" viewBox="0 0 24 24"><path d="M2 12 C 6 5, 18 5, 22 12 C 18 19, 6 19, 2 12 Z" fill="none" stroke="#7b7d89" stroke-width="1.8"/><circle cx="12" cy="12" r="4" fill="#7b7d89"/><circle cx="10.5" cy="10.5" r="1.3" fill="#fff"/></svg><div style="position:absolute;left:2899px;top:1044.0px;width:39px;height:35.0px;border:2px solid #c8c8d2;background:#fff;border-radius:4px;"></div><svg style="position:absolute;left:2908px;top:1051.5px;" width="24" height="24" viewBox="0 0 24 24"><rect x="3" y="11" width="12" height="10" rx="1" fill="#7b7d89"/><path d="M12 11 V 7.5 A 4.2 4.2 0 0 1 20.4 7.5 V 9" fill="none" stroke="#7b7d89" stroke-width="2.6"/></svg><svg style="position:absolute;left:2579px;top:1127.5px;" width="30" height="30" viewBox="0 0 30 30"><path d="M3 24 A 14 14 0 1 1 27 24 Z" fill="#2b2b33"/><g fill="#fff"><circle cx="15" cy="5.5" r="1.8"/><circle cx="8.2" cy="8.3" r="1.8"/><circle cx="21.8" cy="8.3" r="1.8"/><circle cx="5.3" cy="15" r="1.8"/><circle cx="24.7" cy="15" r="1.8"/></g><path d="M17 8.5 L 14.6 18" stroke="#fff" stroke-width="2.4" stroke-linecap="round"/><circle cx="14.4" cy="19.5" r="2.9" fill="#fff"/></svg><div style="position:absolute;left:2620.5px;top:1125.81px;font-size:27.4px;line-height:27.4px;color:#2b2b33;font-weight:normal;font-style:normal;white-space:nowrap;">OEE Dashboard for Line 1</div><svg style="position:absolute;left:2515px;top:1210px;" width="20" height="14" viewBox="0 0 20 14"><path d="M2 2 L 9 9 L 16 2" fill="none" stroke="#2b2b33" stroke-width="2.4"/></svg><svg style="position:absolute;left:2545px;top:1203.5px;" width="30" height="26" viewBox="0 0 30 26"><g fill="none" stroke="#2b2b33" stroke-width="2.4"><rect x="1.5" y="1.5" width="25" height="21" rx="1.5"/><path d="M1.5 8.3 H 26.5 M1.5 15.3 H 26.5 M10 1.5 V 22.5 M18 1.5 V 22.5"/></g></svg><div style="position:absolute;left:2584px;top:1202.89px;font-size:27.3px;line-height:27.3px;color:#2b2b33;font-weight:normal;font-style:normal;white-space:nowrap;">Downtime summery</div><div style="position:absolute;left:2847px;top:1204.85px;font-size:23.8px;line-height:23.8px;color:#9a9ca6;font-weight:normal;font-style:normal;white-space:nowrap;">1 Widgets</div><div style="position:absolute;left:2847px;top:1196.5px;width:40px;height:35.0px;border:2px solid #c8c8d2;background:#fff;border-radius:4px;"></div><svg style="position:absolute;left:2857px;top:1204px;" width="24" height="24" viewBox="0 0 24 24"><path d="M2 12 C 6 5, 18 5, 22 12 C 18 19, 6 19, 2 12 Z" fill="none" stroke="#7b7d89" stroke-width="1.8"/><circle cx="12" cy="12" r="4" fill="#7b7d89"/><circle cx="10.5" cy="10.5" r="1.3" fill="#fff"/></svg><div style="position:absolute;left:2899px;top:1196.5px;width:39px;height:35.0px;border:2px solid #c8c8d2;background:#fff;border-radius:4px;"></div><svg style="position:absolute;left:2908px;top:1204px;" width="24" height="24" viewBox="0 0 24 24"><rect x="3" y="11" width="12" height="10" rx="1" fill="#7b7d89"/><path d="M12 11 V 7.5 A 4.2 4.2 0 0 1 20.4 7.5 V 9" fill="none" stroke="#7b7d89" stroke-width="2.6"/></svg><svg style="position:absolute;left:2579px;top:1280.5px;" width="30" height="30" viewBox="0 0 30 30"><path d="M3 24 A 14 14 0 1 1 27 24 Z" fill="#2b2b33"/><g fill="#fff"><circle cx="15" cy="5.5" r="1.8"/><circle cx="8.2" cy="8.3" r="1.8"/><circle cx="21.8" cy="8.3" r="1.8"/><circle cx="5.3" cy="15" r="1.8"/><circle cx="24.7" cy="15" r="1.8"/></g><path d="M17 8.5 L 14.6 18" stroke="#fff" stroke-width="2.4" stroke-linecap="round"/><circle cx="14.4" cy="19.5" r="2.9" fill="#fff"/></svg><div style="position:absolute;left:2620.5px;top:1278.81px;font-size:27.4px;line-height:27.4px;color:#2b2b33;font-weight:normal;font-style:normal;white-space:nowrap;">OEE Dashboard for Line 1</div><svg style="position:absolute;left:2515px;top:1362px;" width="20" height="14" viewBox="0 0 20 14"><path d="M2 2 L 9 9 L 16 2" fill="none" stroke="#2b2b33" stroke-width="2.4"/></svg><svg style="position:absolute;left:2545px;top:1355.5px;" width="30" height="26" viewBox="0 0 30 26"><g fill="none" stroke="#2b2b33" stroke-width="2.4"><rect x="1.5" y="1.5" width="25" height="21" rx="1.5"/><path d="M1.5 8.3 H 26.5 M1.5 15.3 H 26.5 M10 1.5 V 22.5 M18 1.5 V 22.5"/></g></svg><div style="position:absolute;left:2584px;top:1354.89px;font-size:27.3px;line-height:27.3px;color:#2b2b33;font-weight:normal;font-style:normal;white-space:nowrap;">Production</div><div style="position:absolute;left:2733px;top:1356.85px;font-size:23.8px;line-height:23.8px;color:#9a9ca6;font-weight:normal;font-style:normal;white-space:nowrap;">1 Widgets</div><div style="position:absolute;left:2847px;top:1348.5px;width:40px;height:35.0px;border:2px solid #c8c8d2;background:#fff;border-radius:4px;"></div><svg style="position:absolute;left:2857px;top:1356px;" width="24" height="24" viewBox="0 0 24 24"><path d="M2 12 C 6 5, 18 5, 22 12 C 18 19, 6 19, 2 12 Z" fill="none" stroke="#7b7d89" stroke-width="1.8"/><circle cx="12" cy="12" r="4" fill="#7b7d89"/><circle cx="10.5" cy="10.5" r="1.3" fill="#fff"/></svg><div style="position:absolute;left:2899px;top:1348.5px;width:39px;height:35.0px;border:2px solid #c8c8d2;background:#fff;border-radius:4px;"></div><svg style="position:absolute;left:2908px;top:1356px;" width="24" height="24" viewBox="0 0 24 24"><rect x="3" y="11" width="12" height="10" rx="1" fill="#7b7d89"/><path d="M12 11 V 7.5 A 4.2 4.2 0 0 1 20.4 7.5 V 9" fill="none" stroke="#7b7d89" stroke-width="2.6"/></svg><svg style="position:absolute;left:2579px;top:1433.0px;" width="30" height="30" viewBox="0 0 30 30"><path d="M3 24 A 14 14 0 1 1 27 24 Z" fill="#2b2b33"/><g fill="#fff"><circle cx="15" cy="5.5" r="1.8"/><circle cx="8.2" cy="8.3" r="1.8"/><circle cx="21.8" cy="8.3" r="1.8"/><circle cx="5.3" cy="15" r="1.8"/><circle cx="24.7" cy="15" r="1.8"/></g><path d="M17 8.5 L 14.6 18" stroke="#fff" stroke-width="2.4" stroke-linecap="round"/><circle cx="14.4" cy="19.5" r="2.9" fill="#fff"/></svg><div style="position:absolute;left:2620.5px;top:1431.31px;font-size:27.4px;line-height:27.4px;color:#2b2b33;font-weight:normal;font-style:normal;white-space:nowrap;">OEE Dashboard for Line 1</div><svg style="position:absolute;left:2515px;top:1534px;" width="20" height="14" viewBox="0 0 20 14"><path d="M2 2 L 9 9 L 16 2" fill="none" stroke="#2b2b33" stroke-width="2.4"/></svg><svg style="position:absolute;left:2545px;top:1527.5px;" width="30" height="26" viewBox="0 0 30 26"><g fill="none" stroke="#2b2b33" stroke-width="2.4"><rect x="1.5" y="1.5" width="25" height="21" rx="1.5"/><path d="M1.5 8.3 H 26.5 M1.5 15.3 H 26.5 M10 1.5 V 22.5 M18 1.5 V 22.5"/></g></svg><div style="position:absolute;left:2584px;top:1526.89px;font-size:27.3px;line-height:27.3px;color:#2b2b33;font-weight:normal;font-style:normal;white-space:nowrap;">Top Underperformi…</div><div style="position:absolute;left:2879px;top:1503.85px;font-size:23.8px;line-height:23.8px;color:#9a9ca6;font-weight:normal;font-style:normal;white-space:nowrap;">1</div><div style="position:absolute;left:2874.5px;top:1548.85px;font-size:23.8px;line-height:23.8px;color:#9a9ca6;font-weight:normal;font-style:normal;white-space:nowrap;">Widgets</div><div style="position:absolute;left:2847px;top:1520.5px;width:40px;height:35.0px;border:2px solid #c8c8d2;background:#fff;border-radius:4px;"></div><svg style="position:absolute;left:2857px;top:1528px;" width="24" height="24" viewBox="0 0 24 24"><path d="M2 12 C 6 5, 18 5, 22 12 C 18 19, 6 19, 2 12 Z" fill="none" stroke="#7b7d89" stroke-width="1.8"/><circle cx="12" cy="12" r="4" fill="#7b7d89"/><circle cx="10.5" cy="10.5" r="1.3" fill="#fff"/></svg><div style="position:absolute;left:2899px;top:1520.5px;width:39px;height:35.0px;border:2px solid #c8c8d2;background:#fff;border-radius:4px;"></div><svg style="position:absolute;left:2908px;top:1528px;" width="24" height="24" viewBox="0 0 24 24"><rect x="3" y="11" width="12" height="10" rx="1" fill="#7b7d89"/><path d="M12 11 V 7.5 A 4.2 4.2 0 0 1 20.4 7.5 V 9" fill="none" stroke="#7b7d89" stroke-width="2.6"/></svg><svg style="position:absolute;left:2579px;top:1625.0px;" width="30" height="30" viewBox="0 0 30 30"><path d="M3 24 A 14 14 0 1 1 27 24 Z" fill="#2b2b33"/><g fill="#fff"><circle cx="15" cy="5.5" r="1.8"/><circle cx="8.2" cy="8.3" r="1.8"/><circle cx="21.8" cy="8.3" r="1.8"/><circle cx="5.3" cy="15" r="1.8"/><circle cx="24.7" cy="15" r="1.8"/></g><path d="M17 8.5 L 14.6 18" stroke="#fff" stroke-width="2.4" stroke-linecap="round"/><circle cx="14.4" cy="19.5" r="2.9" fill="#fff"/></svg><div style="position:absolute;left:2620.5px;top:1623.31px;font-size:27.4px;line-height:27.4px;color:#2b2b33;font-weight:normal;font-style:normal;white-space:nowrap;">OEE Dashboard for Line 1</div><div style="position:absolute;left:2397px;top:1670px;width:625px;height:2px;background:#b3b3c0;"></div><div style="position:absolute;left:2397px;top:1672px;width:625px;height:50px;background:#f3f3fb;"></div><div style="position:absolute;left:2397px;top:1722px;width:627px;height:2px;background:#b3b3c0;"></div></body></html>
